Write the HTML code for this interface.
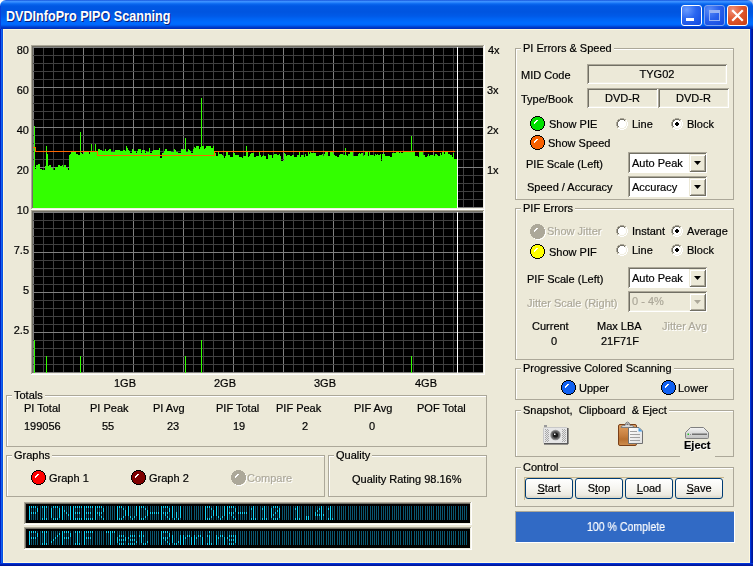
<!DOCTYPE html><html><head><meta charset="utf-8"><style>
html,body{margin:0;padding:0;width:753px;height:566px;overflow:hidden;background:#ece9d8}
.t{position:absolute;margin:1px 0 0 -1px;will-change:transform;-webkit-text-stroke-width:0.2px;font-family:'Liberation Sans', sans-serif;font-size:11px;line-height:13px;white-space:nowrap}
</style></head><body>
<div style="position:absolute;left:0;top:0;width:753px;height:8px;background:linear-gradient(90deg,#fff 50%,#b4c2ec 50%)"></div><div style="position:absolute;left:0;top:8px;width:753px;height:558px;background:#0831d9"></div><div style="position:absolute;left:0;top:0;width:753px;height:30px;border-radius:6px 6px 0 0;background:linear-gradient(180deg,#0a3cd0 0px,#3d95ff 1px,#3a8cff 2px,#1a7af8 3px,#0a66ee 4px,#0058e4 6px,#0055e0 12px,#005ae8 16px,#0064f4 19px,#006cff 23px,#0066fa 25px,#0052e2 26px,#0040d0 27px,#0034c0 28px,#0030b8 29px)"></div><div style="position:absolute;left:0;top:29px;width:3px;height:537px;background:linear-gradient(90deg,#0020c0 0,#0020c0 1px,#1262f2 1px,#1262f2 2px,#0850e0 2px)"></div><div style="position:absolute;left:0;top:6px;width:1px;height:23px;background:#0a40d8"></div><div style="position:absolute;left:750px;top:29px;width:3px;height:537px;background:linear-gradient(90deg,#0040f0,#0020b0 50%,#001090)"></div><div style="position:absolute;left:0;top:563px;width:753px;height:3px;background:linear-gradient(180deg,#0040f0,#0020b0 50%,#001090)"></div><div style="position:absolute;left:3px;top:29px;width:747px;height:534px;background:#ece9d8;box-shadow:inset 1px 1px 0 #fff8dc, inset -1px -1px 0 #fff8dc"></div><div style="position:absolute;left:7px;top:9px;font-family:'Liberation Sans', sans-serif;font-size:14px;line-height:16px;font-weight:bold;color:#0a1e7a;white-space:nowrap;transform-origin:0 0;transform:scaleX(0.9)">DVDInfoPro PIPO Scanning</div><div style="position:absolute;left:6px;top:8px;font-family:'Liberation Sans', sans-serif;font-size:14px;line-height:16px;font-weight:bold;color:#fff;white-space:nowrap;transform-origin:0 0;transform:scaleX(0.9)">DVDInfoPro PIPO Scanning</div><div style="position:absolute;left:681px;top:5px;width:21px;height:21px;box-sizing:border-box;border:1px solid #fff;border-radius:3px;background:radial-gradient(circle at 25% 20%,#6a9cff 0,#2a66f0 45%,#1048e0 100%)"></div><div style="position:absolute;left:686px;top:18px;width:8px;height:3px;background:#fff"></div><div style="position:absolute;left:704px;top:5px;width:21px;height:21px;box-sizing:border-box;border:1px solid #7ea4f0;border-radius:3px;background:radial-gradient(circle at 25% 20%,#5a8cf8 0,#2a62ec 45%,#1048e0 100%)"></div><div style="position:absolute;left:709px;top:10px;width:11px;height:11px;box-sizing:border-box;border:1px solid #98b4f4;border-top-width:3px"></div><div style="position:absolute;left:727px;top:5px;width:21px;height:21px;box-sizing:border-box;border:1px solid #fff;border-radius:3px;background:radial-gradient(circle at 25% 20%,#f0907a 0,#e0582e 45%,#c83c10 100%)"></div><svg style="position:absolute;left:727px;top:5px" width="21" height="21"><path d="M6 6 L15 15 M15 6 L6 15" stroke="#fff" stroke-width="2.2" stroke-linecap="square"/></svg><svg style="position:absolute;left:0;top:0" width="753" height="566" shape-rendering="crispEdges"><rect x="31" y="45" width="454" height="165" fill="#fff"/><rect x="31" y="45" width="453" height="164" fill="#aca899"/><rect x="32" y="46" width="452" height="163" fill="#f1efe2"/><rect x="32" y="46" width="451" height="162" fill="#716f64"/><rect x="33" y="47" width="450" height="161" fill="#000"/><rect x="33" y="47" width="1" height="161" fill="#808080"/><rect x="43" y="47" width="1" height="161" fill="#404040"/><rect x="53" y="47" width="1" height="161" fill="#404040"/><rect x="63" y="47" width="1" height="161" fill="#404040"/><rect x="73" y="47" width="1" height="161" fill="#404040"/><rect x="83" y="47" width="1" height="161" fill="#808080"/><rect x="93" y="47" width="1" height="161" fill="#404040"/><rect x="103" y="47" width="1" height="161" fill="#404040"/><rect x="113" y="47" width="1" height="161" fill="#404040"/><rect x="123" y="47" width="1" height="161" fill="#404040"/><rect x="133" y="47" width="1" height="161" fill="#808080"/><rect x="143" y="47" width="1" height="161" fill="#404040"/><rect x="153" y="47" width="1" height="161" fill="#404040"/><rect x="163" y="47" width="1" height="161" fill="#404040"/><rect x="173" y="47" width="1" height="161" fill="#404040"/><rect x="183" y="47" width="1" height="161" fill="#808080"/><rect x="193" y="47" width="1" height="161" fill="#404040"/><rect x="203" y="47" width="1" height="161" fill="#404040"/><rect x="213" y="47" width="1" height="161" fill="#404040"/><rect x="223" y="47" width="1" height="161" fill="#404040"/><rect x="233" y="47" width="1" height="161" fill="#808080"/><rect x="243" y="47" width="1" height="161" fill="#404040"/><rect x="253" y="47" width="1" height="161" fill="#404040"/><rect x="263" y="47" width="1" height="161" fill="#404040"/><rect x="273" y="47" width="1" height="161" fill="#404040"/><rect x="283" y="47" width="1" height="161" fill="#808080"/><rect x="293" y="47" width="1" height="161" fill="#404040"/><rect x="303" y="47" width="1" height="161" fill="#404040"/><rect x="313" y="47" width="1" height="161" fill="#404040"/><rect x="323" y="47" width="1" height="161" fill="#404040"/><rect x="333" y="47" width="1" height="161" fill="#808080"/><rect x="343" y="47" width="1" height="161" fill="#404040"/><rect x="353" y="47" width="1" height="161" fill="#404040"/><rect x="363" y="47" width="1" height="161" fill="#404040"/><rect x="373" y="47" width="1" height="161" fill="#404040"/><rect x="383" y="47" width="1" height="161" fill="#808080"/><rect x="393" y="47" width="1" height="161" fill="#404040"/><rect x="403" y="47" width="1" height="161" fill="#404040"/><rect x="413" y="47" width="1" height="161" fill="#404040"/><rect x="423" y="47" width="1" height="161" fill="#404040"/><rect x="433" y="47" width="1" height="161" fill="#808080"/><rect x="443" y="47" width="1" height="161" fill="#404040"/><rect x="453" y="47" width="1" height="161" fill="#404040"/><rect x="463" y="47" width="1" height="161" fill="#404040"/><rect x="473" y="47" width="1" height="161" fill="#404040"/><rect x="33" y="47" width="450" height="1" fill="#808080"/><rect x="33" y="55" width="450" height="1" fill="#404040"/><rect x="33" y="63" width="450" height="1" fill="#404040"/><rect x="33" y="71" width="450" height="1" fill="#404040"/><rect x="33" y="79" width="450" height="1" fill="#404040"/><rect x="33" y="87" width="450" height="1" fill="#808080"/><rect x="33" y="95" width="450" height="1" fill="#404040"/><rect x="33" y="103" width="450" height="1" fill="#404040"/><rect x="33" y="111" width="450" height="1" fill="#404040"/><rect x="33" y="119" width="450" height="1" fill="#404040"/><rect x="33" y="127" width="450" height="1" fill="#808080"/><rect x="33" y="135" width="450" height="1" fill="#404040"/><rect x="33" y="143" width="450" height="1" fill="#404040"/><rect x="33" y="151" width="450" height="1" fill="#404040"/><rect x="33" y="159" width="450" height="1" fill="#404040"/><rect x="33" y="167" width="450" height="1" fill="#808080"/><rect x="33" y="175" width="450" height="1" fill="#404040"/><rect x="33" y="183" width="450" height="1" fill="#404040"/><rect x="33" y="191" width="450" height="1" fill="#404040"/><rect x="33" y="199" width="450" height="1" fill="#404040"/><rect x="33" y="207" width="450" height="1" fill="#808080"/><rect x="31" y="210" width="454" height="165" fill="#fff"/><rect x="31" y="210" width="453" height="164" fill="#aca899"/><rect x="32" y="211" width="452" height="163" fill="#f1efe2"/><rect x="32" y="211" width="451" height="162" fill="#716f64"/><rect x="33" y="212" width="450" height="161" fill="#000"/><rect x="33" y="212" width="1" height="161" fill="#808080"/><rect x="43" y="212" width="1" height="161" fill="#404040"/><rect x="53" y="212" width="1" height="161" fill="#404040"/><rect x="63" y="212" width="1" height="161" fill="#404040"/><rect x="73" y="212" width="1" height="161" fill="#404040"/><rect x="83" y="212" width="1" height="161" fill="#808080"/><rect x="93" y="212" width="1" height="161" fill="#404040"/><rect x="103" y="212" width="1" height="161" fill="#404040"/><rect x="113" y="212" width="1" height="161" fill="#404040"/><rect x="123" y="212" width="1" height="161" fill="#404040"/><rect x="133" y="212" width="1" height="161" fill="#808080"/><rect x="143" y="212" width="1" height="161" fill="#404040"/><rect x="153" y="212" width="1" height="161" fill="#404040"/><rect x="163" y="212" width="1" height="161" fill="#404040"/><rect x="173" y="212" width="1" height="161" fill="#404040"/><rect x="183" y="212" width="1" height="161" fill="#808080"/><rect x="193" y="212" width="1" height="161" fill="#404040"/><rect x="203" y="212" width="1" height="161" fill="#404040"/><rect x="213" y="212" width="1" height="161" fill="#404040"/><rect x="223" y="212" width="1" height="161" fill="#404040"/><rect x="233" y="212" width="1" height="161" fill="#808080"/><rect x="243" y="212" width="1" height="161" fill="#404040"/><rect x="253" y="212" width="1" height="161" fill="#404040"/><rect x="263" y="212" width="1" height="161" fill="#404040"/><rect x="273" y="212" width="1" height="161" fill="#404040"/><rect x="283" y="212" width="1" height="161" fill="#808080"/><rect x="293" y="212" width="1" height="161" fill="#404040"/><rect x="303" y="212" width="1" height="161" fill="#404040"/><rect x="313" y="212" width="1" height="161" fill="#404040"/><rect x="323" y="212" width="1" height="161" fill="#404040"/><rect x="333" y="212" width="1" height="161" fill="#808080"/><rect x="343" y="212" width="1" height="161" fill="#404040"/><rect x="353" y="212" width="1" height="161" fill="#404040"/><rect x="363" y="212" width="1" height="161" fill="#404040"/><rect x="373" y="212" width="1" height="161" fill="#404040"/><rect x="383" y="212" width="1" height="161" fill="#808080"/><rect x="393" y="212" width="1" height="161" fill="#404040"/><rect x="403" y="212" width="1" height="161" fill="#404040"/><rect x="413" y="212" width="1" height="161" fill="#404040"/><rect x="423" y="212" width="1" height="161" fill="#404040"/><rect x="433" y="212" width="1" height="161" fill="#808080"/><rect x="443" y="212" width="1" height="161" fill="#404040"/><rect x="453" y="212" width="1" height="161" fill="#404040"/><rect x="463" y="212" width="1" height="161" fill="#404040"/><rect x="473" y="212" width="1" height="161" fill="#404040"/><rect x="33" y="212" width="450" height="1" fill="#808080"/><rect x="33" y="220" width="450" height="1" fill="#404040"/><rect x="33" y="228" width="450" height="1" fill="#404040"/><rect x="33" y="236" width="450" height="1" fill="#404040"/><rect x="33" y="244" width="450" height="1" fill="#404040"/><rect x="33" y="252" width="450" height="1" fill="#808080"/><rect x="33" y="260" width="450" height="1" fill="#404040"/><rect x="33" y="268" width="450" height="1" fill="#404040"/><rect x="33" y="276" width="450" height="1" fill="#404040"/><rect x="33" y="284" width="450" height="1" fill="#404040"/><rect x="33" y="292" width="450" height="1" fill="#808080"/><rect x="33" y="300" width="450" height="1" fill="#404040"/><rect x="33" y="308" width="450" height="1" fill="#404040"/><rect x="33" y="316" width="450" height="1" fill="#404040"/><rect x="33" y="324" width="450" height="1" fill="#404040"/><rect x="33" y="332" width="450" height="1" fill="#808080"/><rect x="33" y="340" width="450" height="1" fill="#404040"/><rect x="33" y="348" width="450" height="1" fill="#404040"/><rect x="33" y="356" width="450" height="1" fill="#404040"/><rect x="33" y="364" width="450" height="1" fill="#404040"/><rect x="33" y="372" width="450" height="1" fill="#808080"/><rect x="33" y="166" width="1" height="42" fill="#33ff00"/><rect x="34" y="126" width="1" height="82" fill="#33ff00"/><rect x="35" y="169" width="1" height="39" fill="#33ff00"/><rect x="36" y="165" width="1" height="43" fill="#33ff00"/><rect x="37" y="165" width="1" height="43" fill="#33ff00"/><rect x="38" y="164" width="1" height="44" fill="#33ff00"/><rect x="39" y="164" width="1" height="44" fill="#33ff00"/><rect x="40" y="169" width="1" height="39" fill="#33ff00"/><rect x="41" y="169" width="1" height="39" fill="#33ff00"/><rect x="42" y="170" width="1" height="38" fill="#33ff00"/><rect x="43" y="170" width="1" height="38" fill="#33ff00"/><rect x="44" y="170" width="1" height="38" fill="#33ff00"/><rect x="45" y="166" width="1" height="42" fill="#33ff00"/><rect x="46" y="146" width="1" height="62" fill="#33ff00"/><rect x="47" y="154" width="1" height="54" fill="#33ff00"/><rect x="48" y="166" width="1" height="42" fill="#33ff00"/><rect x="49" y="165" width="1" height="43" fill="#33ff00"/><rect x="50" y="165" width="1" height="43" fill="#33ff00"/><rect x="51" y="168" width="1" height="40" fill="#33ff00"/><rect x="52" y="168" width="1" height="40" fill="#33ff00"/><rect x="53" y="170" width="1" height="38" fill="#33ff00"/><rect x="54" y="170" width="1" height="38" fill="#33ff00"/><rect x="55" y="167" width="1" height="41" fill="#33ff00"/><rect x="56" y="167" width="1" height="41" fill="#33ff00"/><rect x="57" y="167" width="1" height="41" fill="#33ff00"/><rect x="58" y="165" width="1" height="43" fill="#33ff00"/><rect x="59" y="165" width="1" height="43" fill="#33ff00"/><rect x="60" y="166" width="1" height="42" fill="#33ff00"/><rect x="61" y="166" width="1" height="42" fill="#33ff00"/><rect x="62" y="165" width="1" height="43" fill="#33ff00"/><rect x="63" y="167" width="1" height="41" fill="#33ff00"/><rect x="64" y="165" width="1" height="43" fill="#33ff00"/><rect x="65" y="165" width="1" height="43" fill="#33ff00"/><rect x="66" y="168" width="1" height="40" fill="#33ff00"/><rect x="67" y="168" width="1" height="40" fill="#33ff00"/><rect x="68" y="170" width="1" height="38" fill="#33ff00"/><rect x="69" y="155" width="1" height="53" fill="#33ff00"/><rect x="70" y="154" width="1" height="54" fill="#33ff00"/><rect x="71" y="152" width="1" height="56" fill="#33ff00"/><rect x="72" y="152" width="1" height="56" fill="#33ff00"/><rect x="73" y="152" width="1" height="56" fill="#33ff00"/><rect x="74" y="152" width="1" height="56" fill="#33ff00"/><rect x="75" y="152" width="1" height="56" fill="#33ff00"/><rect x="76" y="154" width="1" height="54" fill="#33ff00"/><rect x="77" y="154" width="1" height="54" fill="#33ff00"/><rect x="78" y="155" width="1" height="53" fill="#33ff00"/><rect x="79" y="155" width="1" height="53" fill="#33ff00"/><rect x="80" y="132" width="1" height="76" fill="#33ff00"/><rect x="81" y="153" width="1" height="55" fill="#33ff00"/><rect x="82" y="154" width="1" height="54" fill="#33ff00"/><rect x="83" y="154" width="1" height="54" fill="#33ff00"/><rect x="84" y="152" width="1" height="56" fill="#33ff00"/><rect x="85" y="152" width="1" height="56" fill="#33ff00"/><rect x="86" y="152" width="1" height="56" fill="#33ff00"/><rect x="87" y="152" width="1" height="56" fill="#33ff00"/><rect x="88" y="152" width="1" height="56" fill="#33ff00"/><rect x="89" y="154" width="1" height="54" fill="#33ff00"/><rect x="90" y="152" width="1" height="56" fill="#33ff00"/><rect x="91" y="144" width="1" height="64" fill="#33ff00"/><rect x="92" y="152" width="1" height="56" fill="#33ff00"/><rect x="93" y="152" width="1" height="56" fill="#33ff00"/><rect x="94" y="152" width="1" height="56" fill="#33ff00"/><rect x="95" y="144" width="1" height="64" fill="#33ff00"/><rect x="96" y="152" width="1" height="56" fill="#33ff00"/><rect x="97" y="152" width="1" height="56" fill="#33ff00"/><rect x="98" y="149" width="1" height="59" fill="#33ff00"/><rect x="99" y="149" width="1" height="59" fill="#33ff00"/><rect x="100" y="150" width="1" height="58" fill="#33ff00"/><rect x="101" y="150" width="1" height="58" fill="#33ff00"/><rect x="102" y="151" width="1" height="57" fill="#33ff00"/><rect x="103" y="151" width="1" height="57" fill="#33ff00"/><rect x="104" y="151" width="1" height="57" fill="#33ff00"/><rect x="105" y="149" width="1" height="59" fill="#33ff00"/><rect x="106" y="151" width="1" height="57" fill="#33ff00"/><rect x="107" y="151" width="1" height="57" fill="#33ff00"/><rect x="108" y="150" width="1" height="58" fill="#33ff00"/><rect x="109" y="149" width="1" height="59" fill="#33ff00"/><rect x="110" y="149" width="1" height="59" fill="#33ff00"/><rect x="111" y="152" width="1" height="56" fill="#33ff00"/><rect x="112" y="152" width="1" height="56" fill="#33ff00"/><rect x="113" y="152" width="1" height="56" fill="#33ff00"/><rect x="114" y="152" width="1" height="56" fill="#33ff00"/><rect x="115" y="150" width="1" height="58" fill="#33ff00"/><rect x="116" y="150" width="1" height="58" fill="#33ff00"/><rect x="117" y="150" width="1" height="58" fill="#33ff00"/><rect x="118" y="150" width="1" height="58" fill="#33ff00"/><rect x="119" y="150" width="1" height="58" fill="#33ff00"/><rect x="120" y="151" width="1" height="57" fill="#33ff00"/><rect x="121" y="151" width="1" height="57" fill="#33ff00"/><rect x="122" y="151" width="1" height="57" fill="#33ff00"/><rect x="123" y="150" width="1" height="58" fill="#33ff00"/><rect x="124" y="150" width="1" height="58" fill="#33ff00"/><rect x="125" y="151" width="1" height="57" fill="#33ff00"/><rect x="126" y="146" width="1" height="62" fill="#33ff00"/><rect x="127" y="148" width="1" height="60" fill="#33ff00"/><rect x="128" y="150" width="1" height="58" fill="#33ff00"/><rect x="129" y="151" width="1" height="57" fill="#33ff00"/><rect x="130" y="153" width="1" height="55" fill="#33ff00"/><rect x="131" y="153" width="1" height="55" fill="#33ff00"/><rect x="132" y="149" width="1" height="59" fill="#33ff00"/><rect x="133" y="150" width="1" height="58" fill="#33ff00"/><rect x="134" y="151" width="1" height="57" fill="#33ff00"/><rect x="135" y="151" width="1" height="57" fill="#33ff00"/><rect x="136" y="153" width="1" height="55" fill="#33ff00"/><rect x="137" y="151" width="1" height="57" fill="#33ff00"/><rect x="138" y="149" width="1" height="59" fill="#33ff00"/><rect x="139" y="149" width="1" height="59" fill="#33ff00"/><rect x="140" y="149" width="1" height="59" fill="#33ff00"/><rect x="141" y="153" width="1" height="55" fill="#33ff00"/><rect x="142" y="150" width="1" height="58" fill="#33ff00"/><rect x="143" y="150" width="1" height="58" fill="#33ff00"/><rect x="144" y="150" width="1" height="58" fill="#33ff00"/><rect x="145" y="153" width="1" height="55" fill="#33ff00"/><rect x="146" y="151" width="1" height="57" fill="#33ff00"/><rect x="147" y="152" width="1" height="56" fill="#33ff00"/><rect x="148" y="152" width="1" height="56" fill="#33ff00"/><rect x="149" y="148" width="1" height="60" fill="#33ff00"/><rect x="150" y="153" width="1" height="55" fill="#33ff00"/><rect x="151" y="153" width="1" height="55" fill="#33ff00"/><rect x="152" y="151" width="1" height="57" fill="#33ff00"/><rect x="153" y="150" width="1" height="58" fill="#33ff00"/><rect x="154" y="150" width="1" height="58" fill="#33ff00"/><rect x="155" y="150" width="1" height="58" fill="#33ff00"/><rect x="156" y="150" width="1" height="58" fill="#33ff00"/><rect x="157" y="150" width="1" height="58" fill="#33ff00"/><rect x="158" y="150" width="1" height="58" fill="#33ff00"/><rect x="159" y="148" width="1" height="60" fill="#33ff00"/><rect x="160" y="158" width="1" height="50" fill="#33ff00"/><rect x="161" y="158" width="1" height="50" fill="#33ff00"/><rect x="162" y="153" width="1" height="55" fill="#33ff00"/><rect x="163" y="153" width="1" height="55" fill="#33ff00"/><rect x="164" y="151" width="1" height="57" fill="#33ff00"/><rect x="165" y="149" width="1" height="59" fill="#33ff00"/><rect x="166" y="149" width="1" height="59" fill="#33ff00"/><rect x="167" y="151" width="1" height="57" fill="#33ff00"/><rect x="168" y="151" width="1" height="57" fill="#33ff00"/><rect x="169" y="151" width="1" height="57" fill="#33ff00"/><rect x="170" y="151" width="1" height="57" fill="#33ff00"/><rect x="171" y="152" width="1" height="56" fill="#33ff00"/><rect x="172" y="152" width="1" height="56" fill="#33ff00"/><rect x="173" y="152" width="1" height="56" fill="#33ff00"/><rect x="174" y="149" width="1" height="59" fill="#33ff00"/><rect x="175" y="150" width="1" height="58" fill="#33ff00"/><rect x="176" y="152" width="1" height="56" fill="#33ff00"/><rect x="177" y="152" width="1" height="56" fill="#33ff00"/><rect x="178" y="153" width="1" height="55" fill="#33ff00"/><rect x="179" y="153" width="1" height="55" fill="#33ff00"/><rect x="180" y="153" width="1" height="55" fill="#33ff00"/><rect x="181" y="149" width="1" height="59" fill="#33ff00"/><rect x="182" y="149" width="1" height="59" fill="#33ff00"/><rect x="183" y="150" width="1" height="58" fill="#33ff00"/><rect x="184" y="149" width="1" height="59" fill="#33ff00"/><rect x="185" y="138" width="1" height="70" fill="#33ff00"/><rect x="186" y="152" width="1" height="56" fill="#33ff00"/><rect x="187" y="152" width="1" height="56" fill="#33ff00"/><rect x="188" y="149" width="1" height="59" fill="#33ff00"/><rect x="189" y="150" width="1" height="58" fill="#33ff00"/><rect x="190" y="151" width="1" height="57" fill="#33ff00"/><rect x="191" y="153" width="1" height="55" fill="#33ff00"/><rect x="192" y="153" width="1" height="55" fill="#33ff00"/><rect x="193" y="149" width="1" height="59" fill="#33ff00"/><rect x="194" y="147" width="1" height="61" fill="#33ff00"/><rect x="195" y="148" width="1" height="60" fill="#33ff00"/><rect x="196" y="146" width="1" height="62" fill="#33ff00"/><rect x="197" y="146" width="1" height="62" fill="#33ff00"/><rect x="198" y="146" width="1" height="62" fill="#33ff00"/><rect x="199" y="149" width="1" height="59" fill="#33ff00"/><rect x="200" y="147" width="1" height="61" fill="#33ff00"/><rect x="201" y="98" width="1" height="110" fill="#33ff00"/><rect x="202" y="146" width="1" height="62" fill="#33ff00"/><rect x="203" y="146" width="1" height="62" fill="#33ff00"/><rect x="204" y="149" width="1" height="59" fill="#33ff00"/><rect x="205" y="148" width="1" height="60" fill="#33ff00"/><rect x="206" y="146" width="1" height="62" fill="#33ff00"/><rect x="207" y="146" width="1" height="62" fill="#33ff00"/><rect x="208" y="146" width="1" height="62" fill="#33ff00"/><rect x="209" y="146" width="1" height="62" fill="#33ff00"/><rect x="210" y="146" width="1" height="62" fill="#33ff00"/><rect x="211" y="148" width="1" height="60" fill="#33ff00"/><rect x="212" y="148" width="1" height="60" fill="#33ff00"/><rect x="213" y="146" width="1" height="62" fill="#33ff00"/><rect x="214" y="154" width="1" height="54" fill="#33ff00"/><rect x="215" y="153" width="1" height="55" fill="#33ff00"/><rect x="216" y="156" width="1" height="52" fill="#33ff00"/><rect x="217" y="156" width="1" height="52" fill="#33ff00"/><rect x="218" y="152" width="1" height="56" fill="#33ff00"/><rect x="219" y="154" width="1" height="54" fill="#33ff00"/><rect x="220" y="154" width="1" height="54" fill="#33ff00"/><rect x="221" y="154" width="1" height="54" fill="#33ff00"/><rect x="222" y="155" width="1" height="53" fill="#33ff00"/><rect x="223" y="156" width="1" height="52" fill="#33ff00"/><rect x="224" y="158" width="1" height="50" fill="#33ff00"/><rect x="225" y="156" width="1" height="52" fill="#33ff00"/><rect x="226" y="152" width="1" height="56" fill="#33ff00"/><rect x="227" y="152" width="1" height="56" fill="#33ff00"/><rect x="228" y="155" width="1" height="53" fill="#33ff00"/><rect x="229" y="155" width="1" height="53" fill="#33ff00"/><rect x="230" y="157" width="1" height="51" fill="#33ff00"/><rect x="231" y="157" width="1" height="51" fill="#33ff00"/><rect x="232" y="157" width="1" height="51" fill="#33ff00"/><rect x="233" y="153" width="1" height="55" fill="#33ff00"/><rect x="234" y="153" width="1" height="55" fill="#33ff00"/><rect x="235" y="155" width="1" height="53" fill="#33ff00"/><rect x="236" y="155" width="1" height="53" fill="#33ff00"/><rect x="237" y="155" width="1" height="53" fill="#33ff00"/><rect x="238" y="155" width="1" height="53" fill="#33ff00"/><rect x="239" y="157" width="1" height="51" fill="#33ff00"/><rect x="240" y="157" width="1" height="51" fill="#33ff00"/><rect x="241" y="157" width="1" height="51" fill="#33ff00"/><rect x="242" y="158" width="1" height="50" fill="#33ff00"/><rect x="243" y="156" width="1" height="52" fill="#33ff00"/><rect x="244" y="156" width="1" height="52" fill="#33ff00"/><rect x="245" y="156" width="1" height="52" fill="#33ff00"/><rect x="246" y="146" width="1" height="62" fill="#33ff00"/><rect x="247" y="152" width="1" height="56" fill="#33ff00"/><rect x="248" y="157" width="1" height="51" fill="#33ff00"/><rect x="249" y="156" width="1" height="52" fill="#33ff00"/><rect x="250" y="154" width="1" height="54" fill="#33ff00"/><rect x="251" y="153" width="1" height="55" fill="#33ff00"/><rect x="252" y="153" width="1" height="55" fill="#33ff00"/><rect x="253" y="153" width="1" height="55" fill="#33ff00"/><rect x="254" y="157" width="1" height="51" fill="#33ff00"/><rect x="255" y="157" width="1" height="51" fill="#33ff00"/><rect x="256" y="156" width="1" height="52" fill="#33ff00"/><rect x="257" y="156" width="1" height="52" fill="#33ff00"/><rect x="258" y="156" width="1" height="52" fill="#33ff00"/><rect x="259" y="152" width="1" height="56" fill="#33ff00"/><rect x="260" y="155" width="1" height="53" fill="#33ff00"/><rect x="261" y="157" width="1" height="51" fill="#33ff00"/><rect x="262" y="156" width="1" height="52" fill="#33ff00"/><rect x="263" y="155" width="1" height="53" fill="#33ff00"/><rect x="264" y="156" width="1" height="52" fill="#33ff00"/><rect x="265" y="156" width="1" height="52" fill="#33ff00"/><rect x="266" y="159" width="1" height="49" fill="#33ff00"/><rect x="267" y="159" width="1" height="49" fill="#33ff00"/><rect x="268" y="154" width="1" height="54" fill="#33ff00"/><rect x="269" y="155" width="1" height="53" fill="#33ff00"/><rect x="270" y="155" width="1" height="53" fill="#33ff00"/><rect x="271" y="155" width="1" height="53" fill="#33ff00"/><rect x="272" y="158" width="1" height="50" fill="#33ff00"/><rect x="273" y="155" width="1" height="53" fill="#33ff00"/><rect x="274" y="154" width="1" height="54" fill="#33ff00"/><rect x="275" y="154" width="1" height="54" fill="#33ff00"/><rect x="276" y="154" width="1" height="54" fill="#33ff00"/><rect x="277" y="155" width="1" height="53" fill="#33ff00"/><rect x="278" y="155" width="1" height="53" fill="#33ff00"/><rect x="279" y="154" width="1" height="54" fill="#33ff00"/><rect x="280" y="156" width="1" height="52" fill="#33ff00"/><rect x="281" y="161" width="1" height="47" fill="#33ff00"/><rect x="282" y="161" width="1" height="47" fill="#33ff00"/><rect x="283" y="161" width="1" height="47" fill="#33ff00"/><rect x="284" y="153" width="1" height="55" fill="#33ff00"/><rect x="285" y="154" width="1" height="54" fill="#33ff00"/><rect x="286" y="156" width="1" height="52" fill="#33ff00"/><rect x="287" y="155" width="1" height="53" fill="#33ff00"/><rect x="288" y="155" width="1" height="53" fill="#33ff00"/><rect x="289" y="155" width="1" height="53" fill="#33ff00"/><rect x="290" y="156" width="1" height="52" fill="#33ff00"/><rect x="291" y="156" width="1" height="52" fill="#33ff00"/><rect x="292" y="155" width="1" height="53" fill="#33ff00"/><rect x="293" y="155" width="1" height="53" fill="#33ff00"/><rect x="294" y="157" width="1" height="51" fill="#33ff00"/><rect x="295" y="157" width="1" height="51" fill="#33ff00"/><rect x="296" y="157" width="1" height="51" fill="#33ff00"/><rect x="297" y="155" width="1" height="53" fill="#33ff00"/><rect x="298" y="155" width="1" height="53" fill="#33ff00"/><rect x="299" y="152" width="1" height="56" fill="#33ff00"/><rect x="300" y="157" width="1" height="51" fill="#33ff00"/><rect x="301" y="155" width="1" height="53" fill="#33ff00"/><rect x="302" y="155" width="1" height="53" fill="#33ff00"/><rect x="303" y="155" width="1" height="53" fill="#33ff00"/><rect x="304" y="157" width="1" height="51" fill="#33ff00"/><rect x="305" y="154" width="1" height="54" fill="#33ff00"/><rect x="306" y="156" width="1" height="52" fill="#33ff00"/><rect x="307" y="156" width="1" height="52" fill="#33ff00"/><rect x="308" y="152" width="1" height="56" fill="#33ff00"/><rect x="309" y="154" width="1" height="54" fill="#33ff00"/><rect x="310" y="152" width="1" height="56" fill="#33ff00"/><rect x="311" y="153" width="1" height="55" fill="#33ff00"/><rect x="312" y="153" width="1" height="55" fill="#33ff00"/><rect x="313" y="153" width="1" height="55" fill="#33ff00"/><rect x="314" y="153" width="1" height="55" fill="#33ff00"/><rect x="315" y="153" width="1" height="55" fill="#33ff00"/><rect x="316" y="156" width="1" height="52" fill="#33ff00"/><rect x="317" y="156" width="1" height="52" fill="#33ff00"/><rect x="318" y="156" width="1" height="52" fill="#33ff00"/><rect x="319" y="155" width="1" height="53" fill="#33ff00"/><rect x="320" y="155" width="1" height="53" fill="#33ff00"/><rect x="321" y="155" width="1" height="53" fill="#33ff00"/><rect x="322" y="154" width="1" height="54" fill="#33ff00"/><rect x="323" y="156" width="1" height="52" fill="#33ff00"/><rect x="324" y="154" width="1" height="54" fill="#33ff00"/><rect x="325" y="152" width="1" height="56" fill="#33ff00"/><rect x="326" y="152" width="1" height="56" fill="#33ff00"/><rect x="327" y="152" width="1" height="56" fill="#33ff00"/><rect x="328" y="156" width="1" height="52" fill="#33ff00"/><rect x="329" y="156" width="1" height="52" fill="#33ff00"/><rect x="330" y="152" width="1" height="56" fill="#33ff00"/><rect x="331" y="152" width="1" height="56" fill="#33ff00"/><rect x="332" y="152" width="1" height="56" fill="#33ff00"/><rect x="333" y="154" width="1" height="54" fill="#33ff00"/><rect x="334" y="155" width="1" height="53" fill="#33ff00"/><rect x="335" y="156" width="1" height="52" fill="#33ff00"/><rect x="336" y="156" width="1" height="52" fill="#33ff00"/><rect x="337" y="157" width="1" height="51" fill="#33ff00"/><rect x="338" y="157" width="1" height="51" fill="#33ff00"/><rect x="339" y="155" width="1" height="53" fill="#33ff00"/><rect x="340" y="154" width="1" height="54" fill="#33ff00"/><rect x="341" y="154" width="1" height="54" fill="#33ff00"/><rect x="342" y="154" width="1" height="54" fill="#33ff00"/><rect x="343" y="155" width="1" height="53" fill="#33ff00"/><rect x="344" y="155" width="1" height="53" fill="#33ff00"/><rect x="345" y="148" width="1" height="60" fill="#33ff00"/><rect x="346" y="155" width="1" height="53" fill="#33ff00"/><rect x="347" y="156" width="1" height="52" fill="#33ff00"/><rect x="348" y="154" width="1" height="54" fill="#33ff00"/><rect x="349" y="154" width="1" height="54" fill="#33ff00"/><rect x="350" y="152" width="1" height="56" fill="#33ff00"/><rect x="351" y="152" width="1" height="56" fill="#33ff00"/><rect x="352" y="152" width="1" height="56" fill="#33ff00"/><rect x="353" y="156" width="1" height="52" fill="#33ff00"/><rect x="354" y="156" width="1" height="52" fill="#33ff00"/><rect x="355" y="156" width="1" height="52" fill="#33ff00"/><rect x="356" y="156" width="1" height="52" fill="#33ff00"/><rect x="357" y="156" width="1" height="52" fill="#33ff00"/><rect x="358" y="154" width="1" height="54" fill="#33ff00"/><rect x="359" y="153" width="1" height="55" fill="#33ff00"/><rect x="360" y="154" width="1" height="54" fill="#33ff00"/><rect x="361" y="153" width="1" height="55" fill="#33ff00"/><rect x="362" y="153" width="1" height="55" fill="#33ff00"/><rect x="363" y="156" width="1" height="52" fill="#33ff00"/><rect x="364" y="155" width="1" height="53" fill="#33ff00"/><rect x="365" y="152" width="1" height="56" fill="#33ff00"/><rect x="366" y="152" width="1" height="56" fill="#33ff00"/><rect x="367" y="152" width="1" height="56" fill="#33ff00"/><rect x="368" y="156" width="1" height="52" fill="#33ff00"/><rect x="369" y="152" width="1" height="56" fill="#33ff00"/><rect x="370" y="155" width="1" height="53" fill="#33ff00"/><rect x="371" y="155" width="1" height="53" fill="#33ff00"/><rect x="372" y="155" width="1" height="53" fill="#33ff00"/><rect x="373" y="155" width="1" height="53" fill="#33ff00"/><rect x="374" y="156" width="1" height="52" fill="#33ff00"/><rect x="375" y="154" width="1" height="54" fill="#33ff00"/><rect x="376" y="155" width="1" height="53" fill="#33ff00"/><rect x="377" y="154" width="1" height="54" fill="#33ff00"/><rect x="378" y="155" width="1" height="53" fill="#33ff00"/><rect x="379" y="155" width="1" height="53" fill="#33ff00"/><rect x="380" y="154" width="1" height="54" fill="#33ff00"/><rect x="381" y="161" width="1" height="47" fill="#33ff00"/><rect x="382" y="154" width="1" height="54" fill="#33ff00"/><rect x="383" y="154" width="1" height="54" fill="#33ff00"/><rect x="384" y="154" width="1" height="54" fill="#33ff00"/><rect x="385" y="156" width="1" height="52" fill="#33ff00"/><rect x="386" y="156" width="1" height="52" fill="#33ff00"/><rect x="387" y="156" width="1" height="52" fill="#33ff00"/><rect x="388" y="156" width="1" height="52" fill="#33ff00"/><rect x="389" y="156" width="1" height="52" fill="#33ff00"/><rect x="390" y="157" width="1" height="51" fill="#33ff00"/><rect x="391" y="157" width="1" height="51" fill="#33ff00"/><rect x="392" y="153" width="1" height="55" fill="#33ff00"/><rect x="393" y="153" width="1" height="55" fill="#33ff00"/><rect x="394" y="153" width="1" height="55" fill="#33ff00"/><rect x="395" y="153" width="1" height="55" fill="#33ff00"/><rect x="396" y="151" width="1" height="57" fill="#33ff00"/><rect x="397" y="152" width="1" height="56" fill="#33ff00"/><rect x="398" y="152" width="1" height="56" fill="#33ff00"/><rect x="399" y="153" width="1" height="55" fill="#33ff00"/><rect x="400" y="151" width="1" height="57" fill="#33ff00"/><rect x="401" y="153" width="1" height="55" fill="#33ff00"/><rect x="402" y="153" width="1" height="55" fill="#33ff00"/><rect x="403" y="152" width="1" height="56" fill="#33ff00"/><rect x="404" y="152" width="1" height="56" fill="#33ff00"/><rect x="405" y="152" width="1" height="56" fill="#33ff00"/><rect x="406" y="152" width="1" height="56" fill="#33ff00"/><rect x="407" y="152" width="1" height="56" fill="#33ff00"/><rect x="408" y="152" width="1" height="56" fill="#33ff00"/><rect x="409" y="152" width="1" height="56" fill="#33ff00"/><rect x="410" y="152" width="1" height="56" fill="#33ff00"/><rect x="411" y="136" width="1" height="72" fill="#33ff00"/><rect x="412" y="152" width="1" height="56" fill="#33ff00"/><rect x="413" y="152" width="1" height="56" fill="#33ff00"/><rect x="414" y="152" width="1" height="56" fill="#33ff00"/><rect x="415" y="156" width="1" height="52" fill="#33ff00"/><rect x="416" y="156" width="1" height="52" fill="#33ff00"/><rect x="417" y="156" width="1" height="52" fill="#33ff00"/><rect x="418" y="157" width="1" height="51" fill="#33ff00"/><rect x="419" y="152" width="1" height="56" fill="#33ff00"/><rect x="420" y="152" width="1" height="56" fill="#33ff00"/><rect x="421" y="152" width="1" height="56" fill="#33ff00"/><rect x="422" y="152" width="1" height="56" fill="#33ff00"/><rect x="423" y="155" width="1" height="53" fill="#33ff00"/><rect x="424" y="155" width="1" height="53" fill="#33ff00"/><rect x="425" y="157" width="1" height="51" fill="#33ff00"/><rect x="426" y="157" width="1" height="51" fill="#33ff00"/><rect x="427" y="156" width="1" height="52" fill="#33ff00"/><rect x="428" y="154" width="1" height="54" fill="#33ff00"/><rect x="429" y="156" width="1" height="52" fill="#33ff00"/><rect x="430" y="155" width="1" height="53" fill="#33ff00"/><rect x="431" y="155" width="1" height="53" fill="#33ff00"/><rect x="432" y="155" width="1" height="53" fill="#33ff00"/><rect x="433" y="155" width="1" height="53" fill="#33ff00"/><rect x="434" y="156" width="1" height="52" fill="#33ff00"/><rect x="435" y="154" width="1" height="54" fill="#33ff00"/><rect x="436" y="154" width="1" height="54" fill="#33ff00"/><rect x="437" y="155" width="1" height="53" fill="#33ff00"/><rect x="438" y="156" width="1" height="52" fill="#33ff00"/><rect x="439" y="156" width="1" height="52" fill="#33ff00"/><rect x="440" y="153" width="1" height="55" fill="#33ff00"/><rect x="441" y="155" width="1" height="53" fill="#33ff00"/><rect x="442" y="152" width="1" height="56" fill="#33ff00"/><rect x="443" y="152" width="1" height="56" fill="#33ff00"/><rect x="444" y="154" width="1" height="54" fill="#33ff00"/><rect x="445" y="152" width="1" height="56" fill="#33ff00"/><rect x="446" y="152" width="1" height="56" fill="#33ff00"/><rect x="447" y="152" width="1" height="56" fill="#33ff00"/><rect x="448" y="154" width="1" height="54" fill="#33ff00"/><rect x="449" y="154" width="1" height="54" fill="#33ff00"/><rect x="450" y="155" width="1" height="53" fill="#33ff00"/><rect x="451" y="155" width="1" height="53" fill="#33ff00"/><rect x="452" y="157" width="1" height="51" fill="#33ff00"/><rect x="453" y="153" width="1" height="55" fill="#33ff00"/><rect x="454" y="159" width="1" height="49" fill="#33ff00"/><rect x="455" y="159" width="1" height="49" fill="#33ff00"/><rect x="456" y="159" width="1" height="49" fill="#33ff00"/><path d="M33 147.5 H35.5 V151.5 H97.5 V155.5 H214.5 V151.5 H454.5" stroke="#ff6600" stroke-width="1" fill="none"/><rect x="34" y="340" width="1" height="33" fill="#33ff00"/><rect x="46" y="356" width="1" height="17" fill="#33ff00"/><rect x="80" y="356" width="1" height="17" fill="#33ff00"/><rect x="185" y="356" width="1" height="17" fill="#33ff00"/><rect x="201" y="340" width="1" height="33" fill="#33ff00"/><rect x="411" y="356" width="1" height="17" fill="#33ff00"/><rect x="457" y="47" width="1" height="161" fill="#fff"/><rect x="457" y="212" width="1" height="161" fill="#fff"/></svg><div class="t" style="left:0;width:30px;text-align:right;top:43px">80</div><div class="t" style="left:0;width:30px;text-align:right;top:83px">60</div><div class="t" style="left:0;width:30px;text-align:right;top:123px">40</div><div class="t" style="left:0;width:30px;text-align:right;top:163px">20</div><div class="t" style="left:0;width:30px;text-align:right;top:203px">10</div><div class="t" style="left:0;width:30px;text-align:right;top:243px">7.5</div><div class="t" style="left:0;width:30px;text-align:right;top:283px">5</div><div class="t" style="left:0;width:30px;text-align:right;top:323px">2.5</div><div class="t" style="left:489px;top:43px;color:#000;font-weight:normal;">4x</div><div class="t" style="left:488px;top:83px;color:#000;font-weight:normal;">3x</div><div class="t" style="left:488px;top:123px;color:#000;font-weight:normal;">2x</div><div class="t" style="left:488px;top:163px;color:#000;font-weight:normal;">1x</div><div class="t" style="left:115px;top:376px;color:#000;font-weight:normal;">1GB</div><div class="t" style="left:215px;top:376px;color:#000;font-weight:normal;">2GB</div><div class="t" style="left:315px;top:376px;color:#000;font-weight:normal;">3GB</div><div class="t" style="left:416px;top:376px;color:#000;font-weight:normal;">4GB</div><div style="position:absolute;left:7px;top:396px;width:480px;height:51px;border:1px solid #fff;box-sizing:border-box"></div><div style="position:absolute;left:6px;top:395px;width:481px;height:52px;border:1px solid #aca899;box-sizing:border-box"></div><div class="t" style="left:13px;top:388px;padding:0 2px;background:#ece9d8">Totals</div><div class="t" style="left:25px;top:401px;color:#000;font-weight:normal;">PI Total</div><div class="t" style="left:91px;top:401px;color:#000;font-weight:normal;">PI Peak</div><div class="t" style="left:154px;top:401px;color:#000;font-weight:normal;">PI Avg</div><div class="t" style="left:217px;top:401px;color:#000;font-weight:normal;">PIF Total</div><div class="t" style="left:277px;top:401px;color:#000;font-weight:normal;">PIF Peak</div><div class="t" style="left:355px;top:401px;color:#000;font-weight:normal;">PIF Avg</div><div class="t" style="left:418px;top:401px;color:#000;font-weight:normal;">POF Total</div><div class="t" style="left:25px;top:419px;color:#000;font-weight:normal;">199056</div><div class="t" style="left:103px;top:419px;color:#000;font-weight:normal;">55</div><div class="t" style="left:168px;top:419px;color:#000;font-weight:normal;">23</div><div class="t" style="left:234px;top:419px;color:#000;font-weight:normal;">19</div><div class="t" style="left:303px;top:419px;color:#000;font-weight:normal;">2</div><div class="t" style="left:370px;top:419px;color:#000;font-weight:normal;">0</div><div style="position:absolute;left:7px;top:456px;width:318px;height:41px;border:1px solid #fff;box-sizing:border-box"></div><div style="position:absolute;left:6px;top:455px;width:319px;height:42px;border:1px solid #aca899;box-sizing:border-box"></div><div class="t" style="left:13px;top:448px;padding:0 2px;background:#ece9d8">Graphs</div><svg style="position:absolute;left:31px;top:470px" width="17" height="17" shape-rendering="crispEdges"><rect x="5" y="0" width="5" height="1" fill="#000"/><rect x="3" y="1" width="2" height="1" fill="#000"/><rect x="10" y="1" width="2" height="1" fill="#000"/><rect x="2" y="2" width="1" height="1" fill="#000"/><rect x="12" y="2" width="1" height="1" fill="#000"/><rect x="1" y="3" width="1" height="1" fill="#000"/><rect x="13" y="3" width="1" height="1" fill="#000"/><rect x="1" y="4" width="1" height="1" fill="#000"/><rect x="13" y="4" width="1" height="1" fill="#000"/><rect x="0" y="5" width="1" height="1" fill="#000"/><rect x="14" y="5" width="1" height="1" fill="#000"/><rect x="0" y="6" width="1" height="1" fill="#000"/><rect x="14" y="6" width="1" height="1" fill="#000"/><rect x="0" y="7" width="1" height="1" fill="#000"/><rect x="14" y="7" width="1" height="1" fill="#000"/><rect x="0" y="8" width="1" height="1" fill="#000"/><rect x="14" y="8" width="1" height="1" fill="#000"/><rect x="0" y="9" width="1" height="1" fill="#000"/><rect x="14" y="9" width="1" height="1" fill="#000"/><rect x="1" y="10" width="1" height="1" fill="#000"/><rect x="13" y="10" width="1" height="1" fill="#000"/><rect x="1" y="11" width="1" height="1" fill="#000"/><rect x="13" y="11" width="1" height="1" fill="#000"/><rect x="2" y="12" width="1" height="1" fill="#000"/><rect x="12" y="12" width="1" height="1" fill="#000"/><rect x="3" y="13" width="2" height="1" fill="#000"/><rect x="10" y="13" width="2" height="1" fill="#000"/><rect x="5" y="14" width="5" height="1" fill="#000"/><rect x="5" y="1" width="5" height="1" fill="#ff0000"/><rect x="3" y="2" width="9" height="1" fill="#ff0000"/><rect x="2" y="3" width="11" height="1" fill="#ff0000"/><rect x="2" y="4" width="11" height="1" fill="#ff0000"/><rect x="1" y="5" width="13" height="1" fill="#ff0000"/><rect x="1" y="6" width="13" height="1" fill="#ff0000"/><rect x="1" y="7" width="13" height="1" fill="#ff0000"/><rect x="1" y="8" width="13" height="1" fill="#ff0000"/><rect x="1" y="9" width="13" height="1" fill="#ff0000"/><rect x="2" y="10" width="11" height="1" fill="#ff0000"/><rect x="2" y="11" width="11" height="1" fill="#ff0000"/><rect x="3" y="12" width="9" height="1" fill="#ff0000"/><rect x="5" y="13" width="5" height="1" fill="#ff0000"/><rect x="4" y="6" width="1" height="1" fill="#fff"/><rect x="4" y="7" width="1" height="1" fill="#fff"/><rect x="5" y="5" width="1" height="1" fill="#fff"/><rect x="5" y="6" width="1" height="1" fill="#fff"/><rect x="6" y="4" width="1" height="1" fill="#fff"/><rect x="6" y="5" width="1" height="1" fill="#fff"/><rect x="7" y="4" width="1" height="1" fill="#fff"/></svg><div class="t" style="left:50px;top:471px;color:#000;font-weight:normal;">Graph 1</div><svg style="position:absolute;left:131px;top:470px" width="17" height="17" shape-rendering="crispEdges"><rect x="5" y="0" width="5" height="1" fill="#000"/><rect x="3" y="1" width="2" height="1" fill="#000"/><rect x="10" y="1" width="2" height="1" fill="#000"/><rect x="2" y="2" width="1" height="1" fill="#000"/><rect x="12" y="2" width="1" height="1" fill="#000"/><rect x="1" y="3" width="1" height="1" fill="#000"/><rect x="13" y="3" width="1" height="1" fill="#000"/><rect x="1" y="4" width="1" height="1" fill="#000"/><rect x="13" y="4" width="1" height="1" fill="#000"/><rect x="0" y="5" width="1" height="1" fill="#000"/><rect x="14" y="5" width="1" height="1" fill="#000"/><rect x="0" y="6" width="1" height="1" fill="#000"/><rect x="14" y="6" width="1" height="1" fill="#000"/><rect x="0" y="7" width="1" height="1" fill="#000"/><rect x="14" y="7" width="1" height="1" fill="#000"/><rect x="0" y="8" width="1" height="1" fill="#000"/><rect x="14" y="8" width="1" height="1" fill="#000"/><rect x="0" y="9" width="1" height="1" fill="#000"/><rect x="14" y="9" width="1" height="1" fill="#000"/><rect x="1" y="10" width="1" height="1" fill="#000"/><rect x="13" y="10" width="1" height="1" fill="#000"/><rect x="1" y="11" width="1" height="1" fill="#000"/><rect x="13" y="11" width="1" height="1" fill="#000"/><rect x="2" y="12" width="1" height="1" fill="#000"/><rect x="12" y="12" width="1" height="1" fill="#000"/><rect x="3" y="13" width="2" height="1" fill="#000"/><rect x="10" y="13" width="2" height="1" fill="#000"/><rect x="5" y="14" width="5" height="1" fill="#000"/><rect x="5" y="1" width="5" height="1" fill="#800000"/><rect x="3" y="2" width="9" height="1" fill="#800000"/><rect x="2" y="3" width="11" height="1" fill="#800000"/><rect x="2" y="4" width="11" height="1" fill="#800000"/><rect x="1" y="5" width="13" height="1" fill="#800000"/><rect x="1" y="6" width="13" height="1" fill="#800000"/><rect x="1" y="7" width="13" height="1" fill="#800000"/><rect x="1" y="8" width="13" height="1" fill="#800000"/><rect x="1" y="9" width="13" height="1" fill="#800000"/><rect x="2" y="10" width="11" height="1" fill="#800000"/><rect x="2" y="11" width="11" height="1" fill="#800000"/><rect x="3" y="12" width="9" height="1" fill="#800000"/><rect x="5" y="13" width="5" height="1" fill="#800000"/><rect x="4" y="6" width="1" height="1" fill="#fff"/><rect x="4" y="7" width="1" height="1" fill="#fff"/><rect x="5" y="5" width="1" height="1" fill="#fff"/><rect x="5" y="6" width="1" height="1" fill="#fff"/><rect x="6" y="4" width="1" height="1" fill="#fff"/><rect x="6" y="5" width="1" height="1" fill="#fff"/><rect x="7" y="4" width="1" height="1" fill="#fff"/></svg><div class="t" style="left:150px;top:471px;color:#000;font-weight:normal;">Graph 2</div><svg style="position:absolute;left:231px;top:470px" width="17" height="17" shape-rendering="crispEdges"><rect x="11" y="2" width="2" height="1" fill="#fff"/><rect x="13" y="3" width="1" height="1" fill="#fff"/><rect x="14" y="4" width="1" height="1" fill="#fff"/><rect x="14" y="5" width="1" height="1" fill="#fff"/><rect x="15" y="6" width="1" height="1" fill="#fff"/><rect x="15" y="7" width="1" height="1" fill="#fff"/><rect x="15" y="8" width="1" height="1" fill="#fff"/><rect x="15" y="9" width="1" height="1" fill="#fff"/><rect x="15" y="10" width="1" height="1" fill="#fff"/><rect x="14" y="11" width="1" height="1" fill="#fff"/><rect x="2" y="12" width="1" height="1" fill="#fff"/><rect x="14" y="12" width="1" height="1" fill="#fff"/><rect x="3" y="13" width="1" height="1" fill="#fff"/><rect x="13" y="13" width="1" height="1" fill="#fff"/><rect x="4" y="14" width="2" height="1" fill="#fff"/><rect x="11" y="14" width="2" height="1" fill="#fff"/><rect x="6" y="15" width="5" height="1" fill="#fff"/><rect x="5" y="0" width="5" height="1" fill="#aca899"/><rect x="3" y="1" width="2" height="1" fill="#aca899"/><rect x="10" y="1" width="2" height="1" fill="#aca899"/><rect x="2" y="2" width="1" height="1" fill="#aca899"/><rect x="12" y="2" width="1" height="1" fill="#aca899"/><rect x="1" y="3" width="1" height="1" fill="#aca899"/><rect x="13" y="3" width="1" height="1" fill="#aca899"/><rect x="1" y="4" width="1" height="1" fill="#aca899"/><rect x="13" y="4" width="1" height="1" fill="#aca899"/><rect x="0" y="5" width="1" height="1" fill="#aca899"/><rect x="14" y="5" width="1" height="1" fill="#aca899"/><rect x="0" y="6" width="1" height="1" fill="#aca899"/><rect x="14" y="6" width="1" height="1" fill="#aca899"/><rect x="0" y="7" width="1" height="1" fill="#aca899"/><rect x="14" y="7" width="1" height="1" fill="#aca899"/><rect x="0" y="8" width="1" height="1" fill="#aca899"/><rect x="14" y="8" width="1" height="1" fill="#aca899"/><rect x="0" y="9" width="1" height="1" fill="#aca899"/><rect x="14" y="9" width="1" height="1" fill="#aca899"/><rect x="1" y="10" width="1" height="1" fill="#aca899"/><rect x="13" y="10" width="1" height="1" fill="#aca899"/><rect x="1" y="11" width="1" height="1" fill="#aca899"/><rect x="13" y="11" width="1" height="1" fill="#aca899"/><rect x="2" y="12" width="1" height="1" fill="#aca899"/><rect x="12" y="12" width="1" height="1" fill="#aca899"/><rect x="3" y="13" width="2" height="1" fill="#aca899"/><rect x="10" y="13" width="2" height="1" fill="#aca899"/><rect x="5" y="14" width="5" height="1" fill="#aca899"/><rect x="5" y="1" width="5" height="1" fill="#aca899"/><rect x="3" y="2" width="9" height="1" fill="#aca899"/><rect x="2" y="3" width="11" height="1" fill="#aca899"/><rect x="2" y="4" width="11" height="1" fill="#aca899"/><rect x="1" y="5" width="13" height="1" fill="#aca899"/><rect x="1" y="6" width="13" height="1" fill="#aca899"/><rect x="1" y="7" width="13" height="1" fill="#aca899"/><rect x="1" y="8" width="13" height="1" fill="#aca899"/><rect x="1" y="9" width="13" height="1" fill="#aca899"/><rect x="2" y="10" width="11" height="1" fill="#aca899"/><rect x="2" y="11" width="11" height="1" fill="#aca899"/><rect x="3" y="12" width="9" height="1" fill="#aca899"/><rect x="5" y="13" width="5" height="1" fill="#aca899"/><rect x="4" y="6" width="1" height="1" fill="#fff"/><rect x="4" y="7" width="1" height="1" fill="#fff"/><rect x="5" y="5" width="1" height="1" fill="#fff"/><rect x="5" y="6" width="1" height="1" fill="#fff"/><rect x="6" y="4" width="1" height="1" fill="#fff"/><rect x="6" y="5" width="1" height="1" fill="#fff"/><rect x="7" y="4" width="1" height="1" fill="#fff"/></svg><div class="t" style="left:249px;top:472px;color:#fff;font-weight:normal;">Compare</div><div class="t" style="left:248px;top:471px;color:#aca899;font-weight:normal;">Compare</div><div style="position:absolute;left:329px;top:456px;width:158px;height:41px;border:1px solid #fff;box-sizing:border-box"></div><div style="position:absolute;left:328px;top:455px;width:159px;height:42px;border:1px solid #aca899;box-sizing:border-box"></div><div class="t" style="left:335px;top:448px;padding:0 2px;background:#ece9d8">Quality</div><div class="t" style="left:353px;top:472px;color:#000;font-weight:normal;">Quality Rating 98.16%</div><svg style="position:absolute;left:0;top:0" width="753" height="566" shape-rendering="crispEdges"><rect x="24" y="502" width="448" height="23" fill="#fff"/><rect x="24" y="502" width="447" height="22" fill="#aca899"/><rect x="25" y="503" width="446" height="21" fill="#f1efe2"/><rect x="25" y="503" width="445" height="20" fill="#716f64"/><rect x="26" y="504" width="444" height="19" fill="#000"/><rect x="29" y="506" width="1" height="14" fill="#0a5670"/><rect x="29" y="506" width="1" height="14" fill="#12d2f6"/><rect x="31" y="506" width="1" height="14" fill="#0a5670"/><rect x="31" y="506" width="1" height="2" fill="#12d2f6"/><rect x="31" y="512" width="1" height="2" fill="#12d2f6"/><rect x="33" y="506" width="1" height="14" fill="#0a5670"/><rect x="33" y="506" width="1" height="2" fill="#12d2f6"/><rect x="33" y="512" width="1" height="2" fill="#12d2f6"/><rect x="35" y="506" width="1" height="14" fill="#0a5670"/><rect x="35" y="506" width="1" height="2" fill="#12d2f6"/><rect x="35" y="512" width="1" height="2" fill="#12d2f6"/><rect x="37" y="506" width="1" height="14" fill="#0a5670"/><rect x="37" y="508" width="1" height="4" fill="#12d2f6"/><rect x="40" y="506" width="1" height="14" fill="#0a5670"/><rect x="42" y="506" width="1" height="14" fill="#0a5670"/><rect x="42" y="506" width="1" height="2" fill="#12d2f6"/><rect x="42" y="518" width="1" height="2" fill="#12d2f6"/><rect x="44" y="506" width="1" height="14" fill="#0a5670"/><rect x="44" y="506" width="1" height="14" fill="#12d2f6"/><rect x="46" y="506" width="1" height="14" fill="#0a5670"/><rect x="46" y="506" width="1" height="2" fill="#12d2f6"/><rect x="46" y="518" width="1" height="2" fill="#12d2f6"/><rect x="48" y="506" width="1" height="14" fill="#0a5670"/><rect x="51" y="506" width="1" height="14" fill="#0a5670"/><rect x="51" y="508" width="1" height="10" fill="#12d2f6"/><rect x="53" y="506" width="1" height="14" fill="#0a5670"/><rect x="53" y="506" width="1" height="2" fill="#12d2f6"/><rect x="53" y="518" width="1" height="2" fill="#12d2f6"/><rect x="55" y="506" width="1" height="14" fill="#0a5670"/><rect x="55" y="506" width="1" height="2" fill="#12d2f6"/><rect x="55" y="518" width="1" height="2" fill="#12d2f6"/><rect x="57" y="506" width="1" height="14" fill="#0a5670"/><rect x="57" y="506" width="1" height="2" fill="#12d2f6"/><rect x="57" y="518" width="1" height="2" fill="#12d2f6"/><rect x="59" y="506" width="1" height="14" fill="#0a5670"/><rect x="59" y="508" width="1" height="10" fill="#12d2f6"/><rect x="62" y="506" width="1" height="14" fill="#0a5670"/><rect x="62" y="506" width="1" height="14" fill="#12d2f6"/><rect x="64" y="506" width="1" height="14" fill="#0a5670"/><rect x="64" y="510" width="1" height="2" fill="#12d2f6"/><rect x="66" y="506" width="1" height="14" fill="#0a5670"/><rect x="66" y="512" width="1" height="2" fill="#12d2f6"/><rect x="68" y="506" width="1" height="14" fill="#0a5670"/><rect x="68" y="514" width="1" height="2" fill="#12d2f6"/><rect x="70" y="506" width="1" height="14" fill="#0a5670"/><rect x="70" y="506" width="1" height="14" fill="#12d2f6"/><rect x="73" y="506" width="1" height="14" fill="#0a5670"/><rect x="73" y="506" width="1" height="14" fill="#12d2f6"/><rect x="75" y="506" width="1" height="14" fill="#0a5670"/><rect x="75" y="506" width="1" height="2" fill="#12d2f6"/><rect x="75" y="512" width="1" height="2" fill="#12d2f6"/><rect x="75" y="518" width="1" height="2" fill="#12d2f6"/><rect x="77" y="506" width="1" height="14" fill="#0a5670"/><rect x="77" y="506" width="1" height="2" fill="#12d2f6"/><rect x="77" y="512" width="1" height="2" fill="#12d2f6"/><rect x="77" y="518" width="1" height="2" fill="#12d2f6"/><rect x="79" y="506" width="1" height="14" fill="#0a5670"/><rect x="79" y="506" width="1" height="2" fill="#12d2f6"/><rect x="79" y="512" width="1" height="2" fill="#12d2f6"/><rect x="79" y="518" width="1" height="2" fill="#12d2f6"/><rect x="81" y="506" width="1" height="14" fill="#0a5670"/><rect x="81" y="506" width="1" height="2" fill="#12d2f6"/><rect x="81" y="518" width="1" height="2" fill="#12d2f6"/><rect x="84" y="506" width="1" height="14" fill="#0a5670"/><rect x="84" y="506" width="1" height="14" fill="#12d2f6"/><rect x="86" y="506" width="1" height="14" fill="#0a5670"/><rect x="86" y="506" width="1" height="2" fill="#12d2f6"/><rect x="86" y="512" width="1" height="2" fill="#12d2f6"/><rect x="86" y="518" width="1" height="2" fill="#12d2f6"/><rect x="88" y="506" width="1" height="14" fill="#0a5670"/><rect x="88" y="506" width="1" height="2" fill="#12d2f6"/><rect x="88" y="512" width="1" height="2" fill="#12d2f6"/><rect x="88" y="518" width="1" height="2" fill="#12d2f6"/><rect x="90" y="506" width="1" height="14" fill="#0a5670"/><rect x="90" y="506" width="1" height="2" fill="#12d2f6"/><rect x="90" y="512" width="1" height="2" fill="#12d2f6"/><rect x="90" y="518" width="1" height="2" fill="#12d2f6"/><rect x="92" y="506" width="1" height="14" fill="#0a5670"/><rect x="92" y="506" width="1" height="2" fill="#12d2f6"/><rect x="92" y="518" width="1" height="2" fill="#12d2f6"/><rect x="95" y="506" width="1" height="14" fill="#0a5670"/><rect x="95" y="506" width="1" height="14" fill="#12d2f6"/><rect x="97" y="506" width="1" height="14" fill="#0a5670"/><rect x="97" y="506" width="1" height="2" fill="#12d2f6"/><rect x="97" y="512" width="1" height="2" fill="#12d2f6"/><rect x="99" y="506" width="1" height="14" fill="#0a5670"/><rect x="99" y="506" width="1" height="2" fill="#12d2f6"/><rect x="99" y="512" width="1" height="4" fill="#12d2f6"/><rect x="101" y="506" width="1" height="14" fill="#0a5670"/><rect x="101" y="506" width="1" height="2" fill="#12d2f6"/><rect x="101" y="512" width="1" height="2" fill="#12d2f6"/><rect x="101" y="516" width="1" height="2" fill="#12d2f6"/><rect x="103" y="506" width="1" height="14" fill="#0a5670"/><rect x="103" y="508" width="1" height="4" fill="#12d2f6"/><rect x="103" y="518" width="1" height="2" fill="#12d2f6"/><rect x="106" y="506" width="1" height="14" fill="#0a5670"/><rect x="108" y="506" width="1" height="14" fill="#0a5670"/><rect x="110" y="506" width="1" height="14" fill="#0a5670"/><rect x="112" y="506" width="1" height="14" fill="#0a5670"/><rect x="114" y="506" width="1" height="14" fill="#0a5670"/><rect x="117" y="506" width="1" height="14" fill="#0a5670"/><rect x="117" y="506" width="1" height="14" fill="#12d2f6"/><rect x="119" y="506" width="1" height="14" fill="#0a5670"/><rect x="119" y="506" width="1" height="2" fill="#12d2f6"/><rect x="119" y="518" width="1" height="2" fill="#12d2f6"/><rect x="121" y="506" width="1" height="14" fill="#0a5670"/><rect x="121" y="506" width="1" height="2" fill="#12d2f6"/><rect x="121" y="518" width="1" height="2" fill="#12d2f6"/><rect x="123" y="506" width="1" height="14" fill="#0a5670"/><rect x="123" y="508" width="1" height="2" fill="#12d2f6"/><rect x="123" y="516" width="1" height="2" fill="#12d2f6"/><rect x="125" y="506" width="1" height="14" fill="#0a5670"/><rect x="125" y="510" width="1" height="6" fill="#12d2f6"/><rect x="128" y="506" width="1" height="14" fill="#0a5670"/><rect x="128" y="506" width="1" height="10" fill="#12d2f6"/><rect x="130" y="506" width="1" height="14" fill="#0a5670"/><rect x="130" y="516" width="1" height="2" fill="#12d2f6"/><rect x="132" y="506" width="1" height="14" fill="#0a5670"/><rect x="132" y="518" width="1" height="2" fill="#12d2f6"/><rect x="134" y="506" width="1" height="14" fill="#0a5670"/><rect x="134" y="516" width="1" height="2" fill="#12d2f6"/><rect x="136" y="506" width="1" height="14" fill="#0a5670"/><rect x="136" y="506" width="1" height="10" fill="#12d2f6"/><rect x="139" y="506" width="1" height="14" fill="#0a5670"/><rect x="139" y="506" width="1" height="14" fill="#12d2f6"/><rect x="141" y="506" width="1" height="14" fill="#0a5670"/><rect x="141" y="506" width="1" height="2" fill="#12d2f6"/><rect x="141" y="518" width="1" height="2" fill="#12d2f6"/><rect x="143" y="506" width="1" height="14" fill="#0a5670"/><rect x="143" y="506" width="1" height="2" fill="#12d2f6"/><rect x="143" y="518" width="1" height="2" fill="#12d2f6"/><rect x="145" y="506" width="1" height="14" fill="#0a5670"/><rect x="145" y="508" width="1" height="2" fill="#12d2f6"/><rect x="145" y="516" width="1" height="2" fill="#12d2f6"/><rect x="147" y="506" width="1" height="14" fill="#0a5670"/><rect x="147" y="510" width="1" height="6" fill="#12d2f6"/><rect x="150" y="506" width="1" height="14" fill="#0a5670"/><rect x="150" y="512" width="1" height="2" fill="#12d2f6"/><rect x="152" y="506" width="1" height="14" fill="#0a5670"/><rect x="152" y="512" width="1" height="2" fill="#12d2f6"/><rect x="154" y="506" width="1" height="14" fill="#0a5670"/><rect x="154" y="512" width="1" height="2" fill="#12d2f6"/><rect x="156" y="506" width="1" height="14" fill="#0a5670"/><rect x="156" y="512" width="1" height="2" fill="#12d2f6"/><rect x="158" y="506" width="1" height="14" fill="#0a5670"/><rect x="158" y="512" width="1" height="2" fill="#12d2f6"/><rect x="161" y="506" width="1" height="14" fill="#0a5670"/><rect x="161" y="506" width="1" height="14" fill="#12d2f6"/><rect x="163" y="506" width="1" height="14" fill="#0a5670"/><rect x="163" y="506" width="1" height="2" fill="#12d2f6"/><rect x="163" y="512" width="1" height="2" fill="#12d2f6"/><rect x="165" y="506" width="1" height="14" fill="#0a5670"/><rect x="165" y="506" width="1" height="2" fill="#12d2f6"/><rect x="165" y="512" width="1" height="4" fill="#12d2f6"/><rect x="167" y="506" width="1" height="14" fill="#0a5670"/><rect x="167" y="506" width="1" height="2" fill="#12d2f6"/><rect x="167" y="512" width="1" height="2" fill="#12d2f6"/><rect x="167" y="516" width="1" height="2" fill="#12d2f6"/><rect x="169" y="506" width="1" height="14" fill="#0a5670"/><rect x="169" y="508" width="1" height="4" fill="#12d2f6"/><rect x="169" y="518" width="1" height="2" fill="#12d2f6"/><rect x="172" y="506" width="1" height="14" fill="#0a5670"/><rect x="172" y="506" width="1" height="12" fill="#12d2f6"/><rect x="174" y="506" width="1" height="14" fill="#0a5670"/><rect x="174" y="518" width="1" height="2" fill="#12d2f6"/><rect x="176" y="506" width="1" height="14" fill="#0a5670"/><rect x="176" y="512" width="1" height="6" fill="#12d2f6"/><rect x="178" y="506" width="1" height="14" fill="#0a5670"/><rect x="178" y="518" width="1" height="2" fill="#12d2f6"/><rect x="180" y="506" width="1" height="14" fill="#0a5670"/><rect x="180" y="506" width="1" height="12" fill="#12d2f6"/><rect x="183" y="506" width="1" height="14" fill="#0a5670"/><rect x="185" y="506" width="1" height="14" fill="#0a5670"/><rect x="187" y="506" width="1" height="14" fill="#0a5670"/><rect x="189" y="506" width="1" height="14" fill="#0a5670"/><rect x="191" y="506" width="1" height="14" fill="#0a5670"/><rect x="194" y="506" width="1" height="14" fill="#0a5670"/><rect x="196" y="506" width="1" height="14" fill="#0a5670"/><rect x="198" y="506" width="1" height="14" fill="#0a5670"/><rect x="200" y="506" width="1" height="14" fill="#0a5670"/><rect x="202" y="506" width="1" height="14" fill="#0a5670"/><rect x="205" y="506" width="1" height="14" fill="#0a5670"/><rect x="205" y="506" width="1" height="14" fill="#12d2f6"/><rect x="207" y="506" width="1" height="14" fill="#0a5670"/><rect x="207" y="506" width="1" height="2" fill="#12d2f6"/><rect x="207" y="518" width="1" height="2" fill="#12d2f6"/><rect x="209" y="506" width="1" height="14" fill="#0a5670"/><rect x="209" y="506" width="1" height="2" fill="#12d2f6"/><rect x="209" y="518" width="1" height="2" fill="#12d2f6"/><rect x="211" y="506" width="1" height="14" fill="#0a5670"/><rect x="211" y="508" width="1" height="2" fill="#12d2f6"/><rect x="211" y="516" width="1" height="2" fill="#12d2f6"/><rect x="213" y="506" width="1" height="14" fill="#0a5670"/><rect x="213" y="510" width="1" height="6" fill="#12d2f6"/><rect x="216" y="506" width="1" height="14" fill="#0a5670"/><rect x="216" y="506" width="1" height="10" fill="#12d2f6"/><rect x="218" y="506" width="1" height="14" fill="#0a5670"/><rect x="218" y="516" width="1" height="2" fill="#12d2f6"/><rect x="220" y="506" width="1" height="14" fill="#0a5670"/><rect x="220" y="518" width="1" height="2" fill="#12d2f6"/><rect x="222" y="506" width="1" height="14" fill="#0a5670"/><rect x="222" y="516" width="1" height="2" fill="#12d2f6"/><rect x="224" y="506" width="1" height="14" fill="#0a5670"/><rect x="224" y="506" width="1" height="10" fill="#12d2f6"/><rect x="227" y="506" width="1" height="14" fill="#0a5670"/><rect x="227" y="506" width="1" height="14" fill="#12d2f6"/><rect x="229" y="506" width="1" height="14" fill="#0a5670"/><rect x="229" y="506" width="1" height="2" fill="#12d2f6"/><rect x="229" y="512" width="1" height="2" fill="#12d2f6"/><rect x="231" y="506" width="1" height="14" fill="#0a5670"/><rect x="231" y="506" width="1" height="2" fill="#12d2f6"/><rect x="231" y="512" width="1" height="4" fill="#12d2f6"/><rect x="233" y="506" width="1" height="14" fill="#0a5670"/><rect x="233" y="506" width="1" height="2" fill="#12d2f6"/><rect x="233" y="512" width="1" height="2" fill="#12d2f6"/><rect x="233" y="516" width="1" height="2" fill="#12d2f6"/><rect x="235" y="506" width="1" height="14" fill="#0a5670"/><rect x="235" y="508" width="1" height="4" fill="#12d2f6"/><rect x="235" y="518" width="1" height="2" fill="#12d2f6"/><rect x="238" y="506" width="1" height="14" fill="#0a5670"/><rect x="238" y="512" width="1" height="2" fill="#12d2f6"/><rect x="240" y="506" width="1" height="14" fill="#0a5670"/><rect x="240" y="512" width="1" height="2" fill="#12d2f6"/><rect x="242" y="506" width="1" height="14" fill="#0a5670"/><rect x="242" y="512" width="1" height="2" fill="#12d2f6"/><rect x="244" y="506" width="1" height="14" fill="#0a5670"/><rect x="244" y="512" width="1" height="2" fill="#12d2f6"/><rect x="246" y="506" width="1" height="14" fill="#0a5670"/><rect x="246" y="512" width="1" height="2" fill="#12d2f6"/><rect x="249" y="506" width="1" height="14" fill="#0a5670"/><rect x="251" y="506" width="1" height="14" fill="#0a5670"/><rect x="251" y="508" width="1" height="2" fill="#12d2f6"/><rect x="251" y="518" width="1" height="2" fill="#12d2f6"/><rect x="253" y="506" width="1" height="14" fill="#0a5670"/><rect x="253" y="506" width="1" height="14" fill="#12d2f6"/><rect x="255" y="506" width="1" height="14" fill="#0a5670"/><rect x="255" y="518" width="1" height="2" fill="#12d2f6"/><rect x="257" y="506" width="1" height="14" fill="#0a5670"/><rect x="260" y="506" width="1" height="14" fill="#0a5670"/><rect x="262" y="506" width="1" height="14" fill="#0a5670"/><rect x="262" y="508" width="1" height="2" fill="#12d2f6"/><rect x="262" y="518" width="1" height="2" fill="#12d2f6"/><rect x="264" y="506" width="1" height="14" fill="#0a5670"/><rect x="264" y="506" width="1" height="14" fill="#12d2f6"/><rect x="266" y="506" width="1" height="14" fill="#0a5670"/><rect x="266" y="518" width="1" height="2" fill="#12d2f6"/><rect x="268" y="506" width="1" height="14" fill="#0a5670"/><rect x="271" y="506" width="1" height="14" fill="#0a5670"/><rect x="271" y="508" width="1" height="10" fill="#12d2f6"/><rect x="273" y="506" width="1" height="14" fill="#0a5670"/><rect x="273" y="506" width="1" height="2" fill="#12d2f6"/><rect x="273" y="514" width="1" height="2" fill="#12d2f6"/><rect x="273" y="518" width="1" height="2" fill="#12d2f6"/><rect x="275" y="506" width="1" height="14" fill="#0a5670"/><rect x="275" y="506" width="1" height="2" fill="#12d2f6"/><rect x="275" y="512" width="1" height="2" fill="#12d2f6"/><rect x="275" y="518" width="1" height="2" fill="#12d2f6"/><rect x="277" y="506" width="1" height="14" fill="#0a5670"/><rect x="277" y="506" width="1" height="2" fill="#12d2f6"/><rect x="277" y="510" width="1" height="2" fill="#12d2f6"/><rect x="277" y="518" width="1" height="2" fill="#12d2f6"/><rect x="279" y="506" width="1" height="14" fill="#0a5670"/><rect x="279" y="508" width="1" height="10" fill="#12d2f6"/><rect x="282" y="506" width="1" height="14" fill="#0a5670"/><rect x="284" y="506" width="1" height="14" fill="#0a5670"/><rect x="286" y="506" width="1" height="14" fill="#0a5670"/><rect x="288" y="506" width="1" height="14" fill="#0a5670"/><rect x="290" y="506" width="1" height="14" fill="#0a5670"/><rect x="293" y="506" width="1" height="14" fill="#0a5670"/><rect x="295" y="506" width="1" height="14" fill="#0a5670"/><rect x="295" y="508" width="1" height="2" fill="#12d2f6"/><rect x="295" y="518" width="1" height="2" fill="#12d2f6"/><rect x="297" y="506" width="1" height="14" fill="#0a5670"/><rect x="297" y="506" width="1" height="14" fill="#12d2f6"/><rect x="299" y="506" width="1" height="14" fill="#0a5670"/><rect x="299" y="518" width="1" height="2" fill="#12d2f6"/><rect x="301" y="506" width="1" height="14" fill="#0a5670"/><rect x="304" y="506" width="1" height="14" fill="#0a5670"/><rect x="306" y="506" width="1" height="14" fill="#0a5670"/><rect x="306" y="516" width="1" height="4" fill="#12d2f6"/><rect x="308" y="506" width="1" height="14" fill="#0a5670"/><rect x="308" y="516" width="1" height="4" fill="#12d2f6"/><rect x="310" y="506" width="1" height="14" fill="#0a5670"/><rect x="312" y="506" width="1" height="14" fill="#0a5670"/><rect x="315" y="506" width="1" height="14" fill="#0a5670"/><rect x="315" y="512" width="1" height="4" fill="#12d2f6"/><rect x="317" y="506" width="1" height="14" fill="#0a5670"/><rect x="317" y="510" width="1" height="2" fill="#12d2f6"/><rect x="317" y="514" width="1" height="2" fill="#12d2f6"/><rect x="319" y="506" width="1" height="14" fill="#0a5670"/><rect x="319" y="508" width="1" height="2" fill="#12d2f6"/><rect x="319" y="514" width="1" height="2" fill="#12d2f6"/><rect x="321" y="506" width="1" height="14" fill="#0a5670"/><rect x="321" y="506" width="1" height="14" fill="#12d2f6"/><rect x="323" y="506" width="1" height="14" fill="#0a5670"/><rect x="323" y="514" width="1" height="2" fill="#12d2f6"/><rect x="326" y="506" width="1" height="14" fill="#0a5670"/><rect x="328" y="506" width="1" height="14" fill="#0a5670"/><rect x="328" y="508" width="1" height="2" fill="#12d2f6"/><rect x="328" y="518" width="1" height="2" fill="#12d2f6"/><rect x="330" y="506" width="1" height="14" fill="#0a5670"/><rect x="330" y="506" width="1" height="14" fill="#12d2f6"/><rect x="332" y="506" width="1" height="14" fill="#0a5670"/><rect x="332" y="518" width="1" height="2" fill="#12d2f6"/><rect x="334" y="506" width="1" height="14" fill="#0a5670"/><rect x="337" y="506" width="1" height="14" fill="#0a5670"/><rect x="339" y="506" width="1" height="14" fill="#0a5670"/><rect x="341" y="506" width="1" height="14" fill="#0a5670"/><rect x="343" y="506" width="1" height="14" fill="#0a5670"/><rect x="345" y="506" width="1" height="14" fill="#0a5670"/><rect x="348" y="506" width="1" height="14" fill="#0a5670"/><rect x="350" y="506" width="1" height="14" fill="#0a5670"/><rect x="352" y="506" width="1" height="14" fill="#0a5670"/><rect x="354" y="506" width="1" height="14" fill="#0a5670"/><rect x="356" y="506" width="1" height="14" fill="#0a5670"/><rect x="359" y="506" width="1" height="14" fill="#0a5670"/><rect x="361" y="506" width="1" height="14" fill="#0a5670"/><rect x="363" y="506" width="1" height="14" fill="#0a5670"/><rect x="365" y="506" width="1" height="14" fill="#0a5670"/><rect x="367" y="506" width="1" height="14" fill="#0a5670"/><rect x="370" y="506" width="1" height="14" fill="#0a5670"/><rect x="372" y="506" width="1" height="14" fill="#0a5670"/><rect x="374" y="506" width="1" height="14" fill="#0a5670"/><rect x="376" y="506" width="1" height="14" fill="#0a5670"/><rect x="378" y="506" width="1" height="14" fill="#0a5670"/><rect x="381" y="506" width="1" height="14" fill="#0a5670"/><rect x="383" y="506" width="1" height="14" fill="#0a5670"/><rect x="385" y="506" width="1" height="14" fill="#0a5670"/><rect x="387" y="506" width="1" height="14" fill="#0a5670"/><rect x="389" y="506" width="1" height="14" fill="#0a5670"/><rect x="392" y="506" width="1" height="14" fill="#0a5670"/><rect x="394" y="506" width="1" height="14" fill="#0a5670"/><rect x="396" y="506" width="1" height="14" fill="#0a5670"/><rect x="398" y="506" width="1" height="14" fill="#0a5670"/><rect x="400" y="506" width="1" height="14" fill="#0a5670"/><rect x="403" y="506" width="1" height="14" fill="#0a5670"/><rect x="405" y="506" width="1" height="14" fill="#0a5670"/><rect x="407" y="506" width="1" height="14" fill="#0a5670"/><rect x="409" y="506" width="1" height="14" fill="#0a5670"/><rect x="411" y="506" width="1" height="14" fill="#0a5670"/><rect x="414" y="506" width="1" height="14" fill="#0a5670"/><rect x="416" y="506" width="1" height="14" fill="#0a5670"/><rect x="418" y="506" width="1" height="14" fill="#0a5670"/><rect x="420" y="506" width="1" height="14" fill="#0a5670"/><rect x="422" y="506" width="1" height="14" fill="#0a5670"/><rect x="425" y="506" width="1" height="14" fill="#0a5670"/><rect x="427" y="506" width="1" height="14" fill="#0a5670"/><rect x="429" y="506" width="1" height="14" fill="#0a5670"/><rect x="431" y="506" width="1" height="14" fill="#0a5670"/><rect x="433" y="506" width="1" height="14" fill="#0a5670"/><rect x="436" y="506" width="1" height="14" fill="#0a5670"/><rect x="438" y="506" width="1" height="14" fill="#0a5670"/><rect x="440" y="506" width="1" height="14" fill="#0a5670"/><rect x="442" y="506" width="1" height="14" fill="#0a5670"/><rect x="444" y="506" width="1" height="14" fill="#0a5670"/><rect x="447" y="506" width="1" height="14" fill="#0a5670"/><rect x="449" y="506" width="1" height="14" fill="#0a5670"/><rect x="451" y="506" width="1" height="14" fill="#0a5670"/><rect x="453" y="506" width="1" height="14" fill="#0a5670"/><rect x="455" y="506" width="1" height="14" fill="#0a5670"/><rect x="458" y="506" width="1" height="14" fill="#0a5670"/><rect x="460" y="506" width="1" height="14" fill="#0a5670"/><rect x="462" y="506" width="1" height="14" fill="#0a5670"/><rect x="464" y="506" width="1" height="14" fill="#0a5670"/><rect x="466" y="506" width="1" height="14" fill="#0a5670"/></svg><svg style="position:absolute;left:0;top:0" width="753" height="566" shape-rendering="crispEdges"><rect x="24" y="527" width="448" height="23" fill="#fff"/><rect x="24" y="527" width="447" height="22" fill="#aca899"/><rect x="25" y="528" width="446" height="21" fill="#f1efe2"/><rect x="25" y="528" width="445" height="20" fill="#716f64"/><rect x="26" y="529" width="444" height="19" fill="#000"/><rect x="29" y="531" width="1" height="14" fill="#0a5670"/><rect x="29" y="531" width="1" height="14" fill="#12d2f6"/><rect x="31" y="531" width="1" height="14" fill="#0a5670"/><rect x="31" y="531" width="1" height="2" fill="#12d2f6"/><rect x="31" y="537" width="1" height="2" fill="#12d2f6"/><rect x="33" y="531" width="1" height="14" fill="#0a5670"/><rect x="33" y="531" width="1" height="2" fill="#12d2f6"/><rect x="33" y="537" width="1" height="2" fill="#12d2f6"/><rect x="35" y="531" width="1" height="14" fill="#0a5670"/><rect x="35" y="531" width="1" height="2" fill="#12d2f6"/><rect x="35" y="537" width="1" height="2" fill="#12d2f6"/><rect x="37" y="531" width="1" height="14" fill="#0a5670"/><rect x="37" y="533" width="1" height="4" fill="#12d2f6"/><rect x="40" y="531" width="1" height="14" fill="#0a5670"/><rect x="42" y="531" width="1" height="14" fill="#0a5670"/><rect x="42" y="531" width="1" height="2" fill="#12d2f6"/><rect x="42" y="543" width="1" height="2" fill="#12d2f6"/><rect x="44" y="531" width="1" height="14" fill="#0a5670"/><rect x="44" y="531" width="1" height="14" fill="#12d2f6"/><rect x="46" y="531" width="1" height="14" fill="#0a5670"/><rect x="46" y="531" width="1" height="2" fill="#12d2f6"/><rect x="46" y="543" width="1" height="2" fill="#12d2f6"/><rect x="48" y="531" width="1" height="14" fill="#0a5670"/><rect x="51" y="531" width="1" height="14" fill="#0a5670"/><rect x="51" y="541" width="1" height="2" fill="#12d2f6"/><rect x="53" y="531" width="1" height="14" fill="#0a5670"/><rect x="53" y="539" width="1" height="2" fill="#12d2f6"/><rect x="55" y="531" width="1" height="14" fill="#0a5670"/><rect x="55" y="537" width="1" height="2" fill="#12d2f6"/><rect x="57" y="531" width="1" height="14" fill="#0a5670"/><rect x="57" y="535" width="1" height="2" fill="#12d2f6"/><rect x="59" y="531" width="1" height="14" fill="#0a5670"/><rect x="59" y="533" width="1" height="2" fill="#12d2f6"/><rect x="62" y="531" width="1" height="14" fill="#0a5670"/><rect x="62" y="531" width="1" height="14" fill="#12d2f6"/><rect x="64" y="531" width="1" height="14" fill="#0a5670"/><rect x="64" y="531" width="1" height="2" fill="#12d2f6"/><rect x="64" y="537" width="1" height="2" fill="#12d2f6"/><rect x="66" y="531" width="1" height="14" fill="#0a5670"/><rect x="66" y="531" width="1" height="2" fill="#12d2f6"/><rect x="66" y="537" width="1" height="2" fill="#12d2f6"/><rect x="68" y="531" width="1" height="14" fill="#0a5670"/><rect x="68" y="531" width="1" height="2" fill="#12d2f6"/><rect x="68" y="537" width="1" height="2" fill="#12d2f6"/><rect x="70" y="531" width="1" height="14" fill="#0a5670"/><rect x="70" y="533" width="1" height="4" fill="#12d2f6"/><rect x="73" y="531" width="1" height="14" fill="#0a5670"/><rect x="75" y="531" width="1" height="14" fill="#0a5670"/><rect x="75" y="531" width="1" height="2" fill="#12d2f6"/><rect x="75" y="543" width="1" height="2" fill="#12d2f6"/><rect x="77" y="531" width="1" height="14" fill="#0a5670"/><rect x="77" y="531" width="1" height="14" fill="#12d2f6"/><rect x="79" y="531" width="1" height="14" fill="#0a5670"/><rect x="79" y="531" width="1" height="2" fill="#12d2f6"/><rect x="79" y="543" width="1" height="2" fill="#12d2f6"/><rect x="81" y="531" width="1" height="14" fill="#0a5670"/><rect x="84" y="531" width="1" height="14" fill="#0a5670"/><rect x="84" y="531" width="1" height="14" fill="#12d2f6"/><rect x="86" y="531" width="1" height="14" fill="#0a5670"/><rect x="86" y="531" width="1" height="2" fill="#12d2f6"/><rect x="86" y="537" width="1" height="2" fill="#12d2f6"/><rect x="88" y="531" width="1" height="14" fill="#0a5670"/><rect x="88" y="531" width="1" height="2" fill="#12d2f6"/><rect x="88" y="537" width="1" height="2" fill="#12d2f6"/><rect x="90" y="531" width="1" height="14" fill="#0a5670"/><rect x="90" y="531" width="1" height="2" fill="#12d2f6"/><rect x="90" y="537" width="1" height="2" fill="#12d2f6"/><rect x="92" y="531" width="1" height="14" fill="#0a5670"/><rect x="92" y="531" width="1" height="2" fill="#12d2f6"/><rect x="95" y="531" width="1" height="14" fill="#0a5670"/><rect x="97" y="531" width="1" height="14" fill="#0a5670"/><rect x="99" y="531" width="1" height="14" fill="#0a5670"/><rect x="101" y="531" width="1" height="14" fill="#0a5670"/><rect x="103" y="531" width="1" height="14" fill="#0a5670"/><rect x="106" y="531" width="1" height="14" fill="#0a5670"/><rect x="106" y="531" width="1" height="2" fill="#12d2f6"/><rect x="108" y="531" width="1" height="14" fill="#0a5670"/><rect x="108" y="531" width="1" height="2" fill="#12d2f6"/><rect x="110" y="531" width="1" height="14" fill="#0a5670"/><rect x="110" y="531" width="1" height="14" fill="#12d2f6"/><rect x="112" y="531" width="1" height="14" fill="#0a5670"/><rect x="112" y="531" width="1" height="2" fill="#12d2f6"/><rect x="114" y="531" width="1" height="14" fill="#0a5670"/><rect x="114" y="531" width="1" height="2" fill="#12d2f6"/><rect x="117" y="531" width="1" height="14" fill="#0a5670"/><rect x="117" y="537" width="1" height="6" fill="#12d2f6"/><rect x="119" y="531" width="1" height="14" fill="#0a5670"/><rect x="119" y="535" width="1" height="2" fill="#12d2f6"/><rect x="119" y="539" width="1" height="2" fill="#12d2f6"/><rect x="119" y="543" width="1" height="2" fill="#12d2f6"/><rect x="121" y="531" width="1" height="14" fill="#0a5670"/><rect x="121" y="535" width="1" height="2" fill="#12d2f6"/><rect x="121" y="539" width="1" height="2" fill="#12d2f6"/><rect x="121" y="543" width="1" height="2" fill="#12d2f6"/><rect x="123" y="531" width="1" height="14" fill="#0a5670"/><rect x="123" y="535" width="1" height="2" fill="#12d2f6"/><rect x="123" y="539" width="1" height="2" fill="#12d2f6"/><rect x="123" y="543" width="1" height="2" fill="#12d2f6"/><rect x="125" y="531" width="1" height="14" fill="#0a5670"/><rect x="125" y="537" width="1" height="4" fill="#12d2f6"/><rect x="128" y="531" width="1" height="14" fill="#0a5670"/><rect x="128" y="537" width="1" height="2" fill="#12d2f6"/><rect x="128" y="543" width="1" height="2" fill="#12d2f6"/><rect x="130" y="531" width="1" height="14" fill="#0a5670"/><rect x="130" y="535" width="1" height="2" fill="#12d2f6"/><rect x="130" y="539" width="1" height="2" fill="#12d2f6"/><rect x="130" y="543" width="1" height="2" fill="#12d2f6"/><rect x="132" y="531" width="1" height="14" fill="#0a5670"/><rect x="132" y="535" width="1" height="2" fill="#12d2f6"/><rect x="132" y="539" width="1" height="2" fill="#12d2f6"/><rect x="132" y="543" width="1" height="2" fill="#12d2f6"/><rect x="134" y="531" width="1" height="14" fill="#0a5670"/><rect x="134" y="535" width="1" height="2" fill="#12d2f6"/><rect x="134" y="539" width="1" height="2" fill="#12d2f6"/><rect x="134" y="543" width="1" height="2" fill="#12d2f6"/><rect x="136" y="531" width="1" height="14" fill="#0a5670"/><rect x="136" y="541" width="1" height="2" fill="#12d2f6"/><rect x="139" y="531" width="1" height="14" fill="#0a5670"/><rect x="139" y="535" width="1" height="2" fill="#12d2f6"/><rect x="141" y="531" width="1" height="14" fill="#0a5670"/><rect x="141" y="531" width="1" height="12" fill="#12d2f6"/><rect x="143" y="531" width="1" height="14" fill="#0a5670"/><rect x="143" y="535" width="1" height="2" fill="#12d2f6"/><rect x="143" y="543" width="1" height="2" fill="#12d2f6"/><rect x="145" y="531" width="1" height="14" fill="#0a5670"/><rect x="145" y="543" width="1" height="2" fill="#12d2f6"/><rect x="147" y="531" width="1" height="14" fill="#0a5670"/><rect x="147" y="541" width="1" height="2" fill="#12d2f6"/><rect x="150" y="531" width="1" height="14" fill="#0a5670"/><rect x="152" y="531" width="1" height="14" fill="#0a5670"/><rect x="154" y="531" width="1" height="14" fill="#0a5670"/><rect x="156" y="531" width="1" height="14" fill="#0a5670"/><rect x="158" y="531" width="1" height="14" fill="#0a5670"/><rect x="161" y="531" width="1" height="14" fill="#0a5670"/><rect x="161" y="531" width="1" height="14" fill="#12d2f6"/><rect x="163" y="531" width="1" height="14" fill="#0a5670"/><rect x="163" y="531" width="1" height="2" fill="#12d2f6"/><rect x="163" y="537" width="1" height="2" fill="#12d2f6"/><rect x="165" y="531" width="1" height="14" fill="#0a5670"/><rect x="165" y="531" width="1" height="2" fill="#12d2f6"/><rect x="165" y="537" width="1" height="4" fill="#12d2f6"/><rect x="167" y="531" width="1" height="14" fill="#0a5670"/><rect x="167" y="531" width="1" height="2" fill="#12d2f6"/><rect x="167" y="537" width="1" height="2" fill="#12d2f6"/><rect x="167" y="541" width="1" height="2" fill="#12d2f6"/><rect x="169" y="531" width="1" height="14" fill="#0a5670"/><rect x="169" y="533" width="1" height="4" fill="#12d2f6"/><rect x="169" y="543" width="1" height="2" fill="#12d2f6"/><rect x="172" y="531" width="1" height="14" fill="#0a5670"/><rect x="172" y="535" width="1" height="8" fill="#12d2f6"/><rect x="174" y="531" width="1" height="14" fill="#0a5670"/><rect x="174" y="543" width="1" height="2" fill="#12d2f6"/><rect x="176" y="531" width="1" height="14" fill="#0a5670"/><rect x="176" y="543" width="1" height="2" fill="#12d2f6"/><rect x="178" y="531" width="1" height="14" fill="#0a5670"/><rect x="178" y="541" width="1" height="2" fill="#12d2f6"/><rect x="180" y="531" width="1" height="14" fill="#0a5670"/><rect x="180" y="535" width="1" height="10" fill="#12d2f6"/><rect x="183" y="531" width="1" height="14" fill="#0a5670"/><rect x="183" y="535" width="1" height="10" fill="#12d2f6"/><rect x="185" y="531" width="1" height="14" fill="#0a5670"/><rect x="185" y="537" width="1" height="2" fill="#12d2f6"/><rect x="187" y="531" width="1" height="14" fill="#0a5670"/><rect x="187" y="535" width="1" height="2" fill="#12d2f6"/><rect x="189" y="531" width="1" height="14" fill="#0a5670"/><rect x="189" y="535" width="1" height="2" fill="#12d2f6"/><rect x="191" y="531" width="1" height="14" fill="#0a5670"/><rect x="191" y="537" width="1" height="8" fill="#12d2f6"/><rect x="194" y="531" width="1" height="14" fill="#0a5670"/><rect x="194" y="535" width="1" height="10" fill="#12d2f6"/><rect x="196" y="531" width="1" height="14" fill="#0a5670"/><rect x="196" y="537" width="1" height="2" fill="#12d2f6"/><rect x="198" y="531" width="1" height="14" fill="#0a5670"/><rect x="198" y="535" width="1" height="2" fill="#12d2f6"/><rect x="200" y="531" width="1" height="14" fill="#0a5670"/><rect x="200" y="535" width="1" height="2" fill="#12d2f6"/><rect x="202" y="531" width="1" height="14" fill="#0a5670"/><rect x="202" y="537" width="1" height="8" fill="#12d2f6"/><rect x="205" y="531" width="1" height="14" fill="#0a5670"/><rect x="207" y="531" width="1" height="14" fill="#0a5670"/><rect x="207" y="535" width="1" height="2" fill="#12d2f6"/><rect x="207" y="543" width="1" height="2" fill="#12d2f6"/><rect x="209" y="531" width="1" height="14" fill="#0a5670"/><rect x="209" y="531" width="1" height="2" fill="#12d2f6"/><rect x="209" y="535" width="1" height="10" fill="#12d2f6"/><rect x="211" y="531" width="1" height="14" fill="#0a5670"/><rect x="211" y="543" width="1" height="2" fill="#12d2f6"/><rect x="213" y="531" width="1" height="14" fill="#0a5670"/><rect x="216" y="531" width="1" height="14" fill="#0a5670"/><rect x="216" y="535" width="1" height="10" fill="#12d2f6"/><rect x="218" y="531" width="1" height="14" fill="#0a5670"/><rect x="218" y="537" width="1" height="2" fill="#12d2f6"/><rect x="220" y="531" width="1" height="14" fill="#0a5670"/><rect x="220" y="535" width="1" height="2" fill="#12d2f6"/><rect x="222" y="531" width="1" height="14" fill="#0a5670"/><rect x="222" y="535" width="1" height="2" fill="#12d2f6"/><rect x="224" y="531" width="1" height="14" fill="#0a5670"/><rect x="224" y="537" width="1" height="8" fill="#12d2f6"/><rect x="227" y="531" width="1" height="14" fill="#0a5670"/><rect x="227" y="537" width="1" height="2" fill="#12d2f6"/><rect x="229" y="531" width="1" height="14" fill="#0a5670"/><rect x="229" y="535" width="1" height="2" fill="#12d2f6"/><rect x="229" y="539" width="1" height="2" fill="#12d2f6"/><rect x="229" y="543" width="1" height="2" fill="#12d2f6"/><rect x="231" y="531" width="1" height="14" fill="#0a5670"/><rect x="231" y="535" width="1" height="2" fill="#12d2f6"/><rect x="231" y="539" width="1" height="2" fill="#12d2f6"/><rect x="231" y="543" width="1" height="2" fill="#12d2f6"/><rect x="233" y="531" width="1" height="14" fill="#0a5670"/><rect x="233" y="535" width="1" height="2" fill="#12d2f6"/><rect x="233" y="539" width="1" height="2" fill="#12d2f6"/><rect x="233" y="543" width="1" height="2" fill="#12d2f6"/><rect x="235" y="531" width="1" height="14" fill="#0a5670"/><rect x="235" y="535" width="1" height="8" fill="#12d2f6"/><rect x="238" y="531" width="1" height="14" fill="#0a5670"/><rect x="240" y="531" width="1" height="14" fill="#0a5670"/><rect x="242" y="531" width="1" height="14" fill="#0a5670"/><rect x="244" y="531" width="1" height="14" fill="#0a5670"/><rect x="246" y="531" width="1" height="14" fill="#0a5670"/><rect x="249" y="531" width="1" height="14" fill="#0a5670"/><rect x="251" y="531" width="1" height="14" fill="#0a5670"/><rect x="253" y="531" width="1" height="14" fill="#0a5670"/><rect x="255" y="531" width="1" height="14" fill="#0a5670"/><rect x="257" y="531" width="1" height="14" fill="#0a5670"/><rect x="260" y="531" width="1" height="14" fill="#0a5670"/><rect x="262" y="531" width="1" height="14" fill="#0a5670"/><rect x="264" y="531" width="1" height="14" fill="#0a5670"/><rect x="266" y="531" width="1" height="14" fill="#0a5670"/><rect x="268" y="531" width="1" height="14" fill="#0a5670"/><rect x="271" y="531" width="1" height="14" fill="#0a5670"/><rect x="273" y="531" width="1" height="14" fill="#0a5670"/><rect x="275" y="531" width="1" height="14" fill="#0a5670"/><rect x="277" y="531" width="1" height="14" fill="#0a5670"/><rect x="279" y="531" width="1" height="14" fill="#0a5670"/><rect x="282" y="531" width="1" height="14" fill="#0a5670"/><rect x="284" y="531" width="1" height="14" fill="#0a5670"/><rect x="286" y="531" width="1" height="14" fill="#0a5670"/><rect x="288" y="531" width="1" height="14" fill="#0a5670"/><rect x="290" y="531" width="1" height="14" fill="#0a5670"/><rect x="293" y="531" width="1" height="14" fill="#0a5670"/><rect x="295" y="531" width="1" height="14" fill="#0a5670"/><rect x="297" y="531" width="1" height="14" fill="#0a5670"/><rect x="299" y="531" width="1" height="14" fill="#0a5670"/><rect x="301" y="531" width="1" height="14" fill="#0a5670"/><rect x="304" y="531" width="1" height="14" fill="#0a5670"/><rect x="306" y="531" width="1" height="14" fill="#0a5670"/><rect x="308" y="531" width="1" height="14" fill="#0a5670"/><rect x="310" y="531" width="1" height="14" fill="#0a5670"/><rect x="312" y="531" width="1" height="14" fill="#0a5670"/><rect x="315" y="531" width="1" height="14" fill="#0a5670"/><rect x="317" y="531" width="1" height="14" fill="#0a5670"/><rect x="319" y="531" width="1" height="14" fill="#0a5670"/><rect x="321" y="531" width="1" height="14" fill="#0a5670"/><rect x="323" y="531" width="1" height="14" fill="#0a5670"/><rect x="326" y="531" width="1" height="14" fill="#0a5670"/><rect x="328" y="531" width="1" height="14" fill="#0a5670"/><rect x="330" y="531" width="1" height="14" fill="#0a5670"/><rect x="332" y="531" width="1" height="14" fill="#0a5670"/><rect x="334" y="531" width="1" height="14" fill="#0a5670"/><rect x="337" y="531" width="1" height="14" fill="#0a5670"/><rect x="339" y="531" width="1" height="14" fill="#0a5670"/><rect x="341" y="531" width="1" height="14" fill="#0a5670"/><rect x="343" y="531" width="1" height="14" fill="#0a5670"/><rect x="345" y="531" width="1" height="14" fill="#0a5670"/><rect x="348" y="531" width="1" height="14" fill="#0a5670"/><rect x="350" y="531" width="1" height="14" fill="#0a5670"/><rect x="352" y="531" width="1" height="14" fill="#0a5670"/><rect x="354" y="531" width="1" height="14" fill="#0a5670"/><rect x="356" y="531" width="1" height="14" fill="#0a5670"/><rect x="359" y="531" width="1" height="14" fill="#0a5670"/><rect x="361" y="531" width="1" height="14" fill="#0a5670"/><rect x="363" y="531" width="1" height="14" fill="#0a5670"/><rect x="365" y="531" width="1" height="14" fill="#0a5670"/><rect x="367" y="531" width="1" height="14" fill="#0a5670"/><rect x="370" y="531" width="1" height="14" fill="#0a5670"/><rect x="372" y="531" width="1" height="14" fill="#0a5670"/><rect x="374" y="531" width="1" height="14" fill="#0a5670"/><rect x="376" y="531" width="1" height="14" fill="#0a5670"/><rect x="378" y="531" width="1" height="14" fill="#0a5670"/><rect x="381" y="531" width="1" height="14" fill="#0a5670"/><rect x="383" y="531" width="1" height="14" fill="#0a5670"/><rect x="385" y="531" width="1" height="14" fill="#0a5670"/><rect x="387" y="531" width="1" height="14" fill="#0a5670"/><rect x="389" y="531" width="1" height="14" fill="#0a5670"/><rect x="392" y="531" width="1" height="14" fill="#0a5670"/><rect x="394" y="531" width="1" height="14" fill="#0a5670"/><rect x="396" y="531" width="1" height="14" fill="#0a5670"/><rect x="398" y="531" width="1" height="14" fill="#0a5670"/><rect x="400" y="531" width="1" height="14" fill="#0a5670"/><rect x="403" y="531" width="1" height="14" fill="#0a5670"/><rect x="405" y="531" width="1" height="14" fill="#0a5670"/><rect x="407" y="531" width="1" height="14" fill="#0a5670"/><rect x="409" y="531" width="1" height="14" fill="#0a5670"/><rect x="411" y="531" width="1" height="14" fill="#0a5670"/><rect x="414" y="531" width="1" height="14" fill="#0a5670"/><rect x="416" y="531" width="1" height="14" fill="#0a5670"/><rect x="418" y="531" width="1" height="14" fill="#0a5670"/><rect x="420" y="531" width="1" height="14" fill="#0a5670"/><rect x="422" y="531" width="1" height="14" fill="#0a5670"/><rect x="425" y="531" width="1" height="14" fill="#0a5670"/><rect x="427" y="531" width="1" height="14" fill="#0a5670"/><rect x="429" y="531" width="1" height="14" fill="#0a5670"/><rect x="431" y="531" width="1" height="14" fill="#0a5670"/><rect x="433" y="531" width="1" height="14" fill="#0a5670"/><rect x="436" y="531" width="1" height="14" fill="#0a5670"/><rect x="438" y="531" width="1" height="14" fill="#0a5670"/><rect x="440" y="531" width="1" height="14" fill="#0a5670"/><rect x="442" y="531" width="1" height="14" fill="#0a5670"/><rect x="444" y="531" width="1" height="14" fill="#0a5670"/><rect x="447" y="531" width="1" height="14" fill="#0a5670"/><rect x="449" y="531" width="1" height="14" fill="#0a5670"/><rect x="451" y="531" width="1" height="14" fill="#0a5670"/><rect x="453" y="531" width="1" height="14" fill="#0a5670"/><rect x="455" y="531" width="1" height="14" fill="#0a5670"/><rect x="458" y="531" width="1" height="14" fill="#0a5670"/><rect x="460" y="531" width="1" height="14" fill="#0a5670"/><rect x="462" y="531" width="1" height="14" fill="#0a5670"/><rect x="464" y="531" width="1" height="14" fill="#0a5670"/><rect x="466" y="531" width="1" height="14" fill="#0a5670"/></svg><div style="position:absolute;left:516px;top:49px;width:218px;height:151px;border:1px solid #fff;box-sizing:border-box"></div><div style="position:absolute;left:515px;top:48px;width:219px;height:152px;border:1px solid #aca899;box-sizing:border-box"></div><div class="t" style="left:522px;top:41px;padding:0 2px;background:#ece9d8">PI Errors &amp; Speed</div><div class="t" style="left:522px;top:68px;color:#000;font-weight:normal;">MID Code</div><div style="position:absolute;left:587px;top:64px;width:140px;height:20px;background:#ece9d8;box-shadow:inset 1px 1px 0 #aca899, inset -1px -1px 0 #fff, inset 2px 2px 0 #716f64, inset -2px -2px 0 #f1efe2"></div><div class="t" style="left:588px;width:140px;text-align:center;top:67px">TYG02</div><div class="t" style="left:522px;top:92px;color:#000;font-weight:normal;">Type/Book</div><div style="position:absolute;left:587px;top:88px;width:71px;height:20px;background:#ece9d8;box-shadow:inset 1px 1px 0 #aca899, inset -1px -1px 0 #fff, inset 2px 2px 0 #716f64, inset -2px -2px 0 #f1efe2"></div><div style="position:absolute;left:658px;top:88px;width:71px;height:20px;background:#ece9d8;box-shadow:inset 1px 1px 0 #aca899, inset -1px -1px 0 #fff, inset 2px 2px 0 #716f64, inset -2px -2px 0 #f1efe2"></div><div class="t" style="left:588px;width:71px;text-align:center;top:91px">DVD-R</div><div class="t" style="left:659px;width:71px;text-align:center;top:91px">DVD-R</div><svg style="position:absolute;left:530px;top:116px" width="17" height="17" shape-rendering="crispEdges"><rect x="5" y="0" width="5" height="1" fill="#000"/><rect x="3" y="1" width="2" height="1" fill="#000"/><rect x="10" y="1" width="2" height="1" fill="#000"/><rect x="2" y="2" width="1" height="1" fill="#000"/><rect x="12" y="2" width="1" height="1" fill="#000"/><rect x="1" y="3" width="1" height="1" fill="#000"/><rect x="13" y="3" width="1" height="1" fill="#000"/><rect x="1" y="4" width="1" height="1" fill="#000"/><rect x="13" y="4" width="1" height="1" fill="#000"/><rect x="0" y="5" width="1" height="1" fill="#000"/><rect x="14" y="5" width="1" height="1" fill="#000"/><rect x="0" y="6" width="1" height="1" fill="#000"/><rect x="14" y="6" width="1" height="1" fill="#000"/><rect x="0" y="7" width="1" height="1" fill="#000"/><rect x="14" y="7" width="1" height="1" fill="#000"/><rect x="0" y="8" width="1" height="1" fill="#000"/><rect x="14" y="8" width="1" height="1" fill="#000"/><rect x="0" y="9" width="1" height="1" fill="#000"/><rect x="14" y="9" width="1" height="1" fill="#000"/><rect x="1" y="10" width="1" height="1" fill="#000"/><rect x="13" y="10" width="1" height="1" fill="#000"/><rect x="1" y="11" width="1" height="1" fill="#000"/><rect x="13" y="11" width="1" height="1" fill="#000"/><rect x="2" y="12" width="1" height="1" fill="#000"/><rect x="12" y="12" width="1" height="1" fill="#000"/><rect x="3" y="13" width="2" height="1" fill="#000"/><rect x="10" y="13" width="2" height="1" fill="#000"/><rect x="5" y="14" width="5" height="1" fill="#000"/><rect x="5" y="1" width="5" height="1" fill="#00e000"/><rect x="3" y="2" width="9" height="1" fill="#00e000"/><rect x="2" y="3" width="11" height="1" fill="#00e000"/><rect x="2" y="4" width="11" height="1" fill="#00e000"/><rect x="1" y="5" width="13" height="1" fill="#00e000"/><rect x="1" y="6" width="13" height="1" fill="#00e000"/><rect x="1" y="7" width="13" height="1" fill="#00e000"/><rect x="1" y="8" width="13" height="1" fill="#00e000"/><rect x="1" y="9" width="13" height="1" fill="#00e000"/><rect x="2" y="10" width="11" height="1" fill="#00e000"/><rect x="2" y="11" width="11" height="1" fill="#00e000"/><rect x="3" y="12" width="9" height="1" fill="#00e000"/><rect x="5" y="13" width="5" height="1" fill="#00e000"/><rect x="4" y="6" width="1" height="1" fill="#fff"/><rect x="4" y="7" width="1" height="1" fill="#fff"/><rect x="5" y="5" width="1" height="1" fill="#fff"/><rect x="5" y="6" width="1" height="1" fill="#fff"/><rect x="6" y="4" width="1" height="1" fill="#fff"/><rect x="6" y="5" width="1" height="1" fill="#fff"/><rect x="7" y="4" width="1" height="1" fill="#fff"/></svg><div class="t" style="left:550px;top:117px;color:#000;font-weight:normal;">Show PIE</div><svg style="position:absolute;left:616px;top:118px" width="12" height="12" shape-rendering="crispEdges"><rect x="4" y="2" width="4" height="1" fill="#fff"/><rect x="3" y="3" width="6" height="1" fill="#fff"/><rect x="2" y="4" width="8" height="1" fill="#fff"/><rect x="2" y="5" width="8" height="1" fill="#fff"/><rect x="2" y="6" width="8" height="1" fill="#fff"/><rect x="2" y="7" width="8" height="1" fill="#fff"/><rect x="3" y="8" width="6" height="1" fill="#fff"/><rect x="4" y="9" width="4" height="1" fill="#fff"/><rect x="4" y="0" width="1" height="1" fill="#aca899"/><rect x="5" y="0" width="1" height="1" fill="#aca899"/><rect x="6" y="0" width="1" height="1" fill="#aca899"/><rect x="7" y="0" width="1" height="1" fill="#aca899"/><rect x="2" y="1" width="1" height="1" fill="#aca899"/><rect x="3" y="1" width="1" height="1" fill="#aca899"/><rect x="8" y="1" width="1" height="1" fill="#aca899"/><rect x="9" y="1" width="1" height="1" fill="#aca899"/><rect x="1" y="2" width="1" height="1" fill="#aca899"/><rect x="10" y="2" width="1" height="1" fill="#fff"/><rect x="1" y="3" width="1" height="1" fill="#aca899"/><rect x="10" y="3" width="1" height="1" fill="#fff"/><rect x="0" y="4" width="1" height="1" fill="#aca899"/><rect x="11" y="4" width="1" height="1" fill="#fff"/><rect x="0" y="5" width="1" height="1" fill="#aca899"/><rect x="11" y="5" width="1" height="1" fill="#fff"/><rect x="0" y="6" width="1" height="1" fill="#aca899"/><rect x="11" y="6" width="1" height="1" fill="#fff"/><rect x="0" y="7" width="1" height="1" fill="#aca899"/><rect x="11" y="7" width="1" height="1" fill="#fff"/><rect x="1" y="8" width="1" height="1" fill="#aca899"/><rect x="10" y="8" width="1" height="1" fill="#fff"/><rect x="1" y="9" width="1" height="1" fill="#aca899"/><rect x="10" y="9" width="1" height="1" fill="#fff"/><rect x="2" y="10" width="1" height="1" fill="#fff"/><rect x="3" y="10" width="1" height="1" fill="#fff"/><rect x="8" y="10" width="1" height="1" fill="#fff"/><rect x="9" y="10" width="1" height="1" fill="#fff"/><rect x="4" y="11" width="1" height="1" fill="#fff"/><rect x="5" y="11" width="1" height="1" fill="#fff"/><rect x="6" y="11" width="1" height="1" fill="#fff"/><rect x="7" y="11" width="1" height="1" fill="#fff"/><rect x="4" y="1" width="1" height="1" fill="#716f64"/><rect x="5" y="1" width="1" height="1" fill="#716f64"/><rect x="6" y="1" width="1" height="1" fill="#716f64"/><rect x="7" y="1" width="1" height="1" fill="#716f64"/><rect x="2" y="2" width="1" height="1" fill="#716f64"/><rect x="3" y="2" width="1" height="1" fill="#716f64"/><rect x="8" y="2" width="1" height="1" fill="#716f64"/><rect x="9" y="2" width="1" height="1" fill="#f1efe2"/><rect x="2" y="3" width="1" height="1" fill="#716f64"/><rect x="9" y="3" width="1" height="1" fill="#f1efe2"/><rect x="1" y="4" width="1" height="1" fill="#716f64"/><rect x="10" y="4" width="1" height="1" fill="#f1efe2"/><rect x="1" y="5" width="1" height="1" fill="#716f64"/><rect x="10" y="5" width="1" height="1" fill="#f1efe2"/><rect x="1" y="6" width="1" height="1" fill="#716f64"/><rect x="10" y="6" width="1" height="1" fill="#f1efe2"/><rect x="1" y="7" width="1" height="1" fill="#716f64"/><rect x="10" y="7" width="1" height="1" fill="#f1efe2"/><rect x="2" y="8" width="1" height="1" fill="#716f64"/><rect x="9" y="8" width="1" height="1" fill="#f1efe2"/><rect x="2" y="9" width="1" height="1" fill="#f1efe2"/><rect x="3" y="9" width="1" height="1" fill="#f1efe2"/><rect x="8" y="9" width="1" height="1" fill="#f1efe2"/><rect x="9" y="9" width="1" height="1" fill="#f1efe2"/><rect x="4" y="10" width="1" height="1" fill="#f1efe2"/><rect x="5" y="10" width="1" height="1" fill="#f1efe2"/><rect x="6" y="10" width="1" height="1" fill="#f1efe2"/><rect x="7" y="10" width="1" height="1" fill="#f1efe2"/></svg><div class="t" style="left:633px;top:117px;color:#000;font-weight:normal;">Line</div><svg style="position:absolute;left:671px;top:118px" width="12" height="12" shape-rendering="crispEdges"><rect x="4" y="2" width="4" height="1" fill="#fff"/><rect x="3" y="3" width="6" height="1" fill="#fff"/><rect x="2" y="4" width="8" height="1" fill="#fff"/><rect x="2" y="5" width="8" height="1" fill="#fff"/><rect x="2" y="6" width="8" height="1" fill="#fff"/><rect x="2" y="7" width="8" height="1" fill="#fff"/><rect x="3" y="8" width="6" height="1" fill="#fff"/><rect x="4" y="9" width="4" height="1" fill="#fff"/><rect x="4" y="0" width="1" height="1" fill="#aca899"/><rect x="5" y="0" width="1" height="1" fill="#aca899"/><rect x="6" y="0" width="1" height="1" fill="#aca899"/><rect x="7" y="0" width="1" height="1" fill="#aca899"/><rect x="2" y="1" width="1" height="1" fill="#aca899"/><rect x="3" y="1" width="1" height="1" fill="#aca899"/><rect x="8" y="1" width="1" height="1" fill="#aca899"/><rect x="9" y="1" width="1" height="1" fill="#aca899"/><rect x="1" y="2" width="1" height="1" fill="#aca899"/><rect x="10" y="2" width="1" height="1" fill="#fff"/><rect x="1" y="3" width="1" height="1" fill="#aca899"/><rect x="10" y="3" width="1" height="1" fill="#fff"/><rect x="0" y="4" width="1" height="1" fill="#aca899"/><rect x="11" y="4" width="1" height="1" fill="#fff"/><rect x="0" y="5" width="1" height="1" fill="#aca899"/><rect x="11" y="5" width="1" height="1" fill="#fff"/><rect x="0" y="6" width="1" height="1" fill="#aca899"/><rect x="11" y="6" width="1" height="1" fill="#fff"/><rect x="0" y="7" width="1" height="1" fill="#aca899"/><rect x="11" y="7" width="1" height="1" fill="#fff"/><rect x="1" y="8" width="1" height="1" fill="#aca899"/><rect x="10" y="8" width="1" height="1" fill="#fff"/><rect x="1" y="9" width="1" height="1" fill="#aca899"/><rect x="10" y="9" width="1" height="1" fill="#fff"/><rect x="2" y="10" width="1" height="1" fill="#fff"/><rect x="3" y="10" width="1" height="1" fill="#fff"/><rect x="8" y="10" width="1" height="1" fill="#fff"/><rect x="9" y="10" width="1" height="1" fill="#fff"/><rect x="4" y="11" width="1" height="1" fill="#fff"/><rect x="5" y="11" width="1" height="1" fill="#fff"/><rect x="6" y="11" width="1" height="1" fill="#fff"/><rect x="7" y="11" width="1" height="1" fill="#fff"/><rect x="4" y="1" width="1" height="1" fill="#716f64"/><rect x="5" y="1" width="1" height="1" fill="#716f64"/><rect x="6" y="1" width="1" height="1" fill="#716f64"/><rect x="7" y="1" width="1" height="1" fill="#716f64"/><rect x="2" y="2" width="1" height="1" fill="#716f64"/><rect x="3" y="2" width="1" height="1" fill="#716f64"/><rect x="8" y="2" width="1" height="1" fill="#716f64"/><rect x="9" y="2" width="1" height="1" fill="#f1efe2"/><rect x="2" y="3" width="1" height="1" fill="#716f64"/><rect x="9" y="3" width="1" height="1" fill="#f1efe2"/><rect x="1" y="4" width="1" height="1" fill="#716f64"/><rect x="10" y="4" width="1" height="1" fill="#f1efe2"/><rect x="1" y="5" width="1" height="1" fill="#716f64"/><rect x="10" y="5" width="1" height="1" fill="#f1efe2"/><rect x="1" y="6" width="1" height="1" fill="#716f64"/><rect x="10" y="6" width="1" height="1" fill="#f1efe2"/><rect x="1" y="7" width="1" height="1" fill="#716f64"/><rect x="10" y="7" width="1" height="1" fill="#f1efe2"/><rect x="2" y="8" width="1" height="1" fill="#716f64"/><rect x="9" y="8" width="1" height="1" fill="#f1efe2"/><rect x="2" y="9" width="1" height="1" fill="#f1efe2"/><rect x="3" y="9" width="1" height="1" fill="#f1efe2"/><rect x="8" y="9" width="1" height="1" fill="#f1efe2"/><rect x="9" y="9" width="1" height="1" fill="#f1efe2"/><rect x="4" y="10" width="1" height="1" fill="#f1efe2"/><rect x="5" y="10" width="1" height="1" fill="#f1efe2"/><rect x="6" y="10" width="1" height="1" fill="#f1efe2"/><rect x="7" y="10" width="1" height="1" fill="#f1efe2"/><rect x="5" y="4" width="2" height="1" fill="#000"/><rect x="4" y="5" width="4" height="2" fill="#000"/><rect x="5" y="7" width="2" height="1" fill="#000"/></svg><div class="t" style="left:688px;top:117px;color:#000;font-weight:normal;">Block</div><svg style="position:absolute;left:530px;top:135px" width="17" height="17" shape-rendering="crispEdges"><rect x="5" y="0" width="5" height="1" fill="#000"/><rect x="3" y="1" width="2" height="1" fill="#000"/><rect x="10" y="1" width="2" height="1" fill="#000"/><rect x="2" y="2" width="1" height="1" fill="#000"/><rect x="12" y="2" width="1" height="1" fill="#000"/><rect x="1" y="3" width="1" height="1" fill="#000"/><rect x="13" y="3" width="1" height="1" fill="#000"/><rect x="1" y="4" width="1" height="1" fill="#000"/><rect x="13" y="4" width="1" height="1" fill="#000"/><rect x="0" y="5" width="1" height="1" fill="#000"/><rect x="14" y="5" width="1" height="1" fill="#000"/><rect x="0" y="6" width="1" height="1" fill="#000"/><rect x="14" y="6" width="1" height="1" fill="#000"/><rect x="0" y="7" width="1" height="1" fill="#000"/><rect x="14" y="7" width="1" height="1" fill="#000"/><rect x="0" y="8" width="1" height="1" fill="#000"/><rect x="14" y="8" width="1" height="1" fill="#000"/><rect x="0" y="9" width="1" height="1" fill="#000"/><rect x="14" y="9" width="1" height="1" fill="#000"/><rect x="1" y="10" width="1" height="1" fill="#000"/><rect x="13" y="10" width="1" height="1" fill="#000"/><rect x="1" y="11" width="1" height="1" fill="#000"/><rect x="13" y="11" width="1" height="1" fill="#000"/><rect x="2" y="12" width="1" height="1" fill="#000"/><rect x="12" y="12" width="1" height="1" fill="#000"/><rect x="3" y="13" width="2" height="1" fill="#000"/><rect x="10" y="13" width="2" height="1" fill="#000"/><rect x="5" y="14" width="5" height="1" fill="#000"/><rect x="5" y="1" width="5" height="1" fill="#f86000"/><rect x="3" y="2" width="9" height="1" fill="#f86000"/><rect x="2" y="3" width="11" height="1" fill="#f86000"/><rect x="2" y="4" width="11" height="1" fill="#f86000"/><rect x="1" y="5" width="13" height="1" fill="#f86000"/><rect x="1" y="6" width="13" height="1" fill="#f86000"/><rect x="1" y="7" width="13" height="1" fill="#f86000"/><rect x="1" y="8" width="13" height="1" fill="#f86000"/><rect x="1" y="9" width="13" height="1" fill="#f86000"/><rect x="2" y="10" width="11" height="1" fill="#f86000"/><rect x="2" y="11" width="11" height="1" fill="#f86000"/><rect x="3" y="12" width="9" height="1" fill="#f86000"/><rect x="5" y="13" width="5" height="1" fill="#f86000"/><rect x="4" y="6" width="1" height="1" fill="#fff"/><rect x="4" y="7" width="1" height="1" fill="#fff"/><rect x="5" y="5" width="1" height="1" fill="#fff"/><rect x="5" y="6" width="1" height="1" fill="#fff"/><rect x="6" y="4" width="1" height="1" fill="#fff"/><rect x="6" y="5" width="1" height="1" fill="#fff"/><rect x="7" y="4" width="1" height="1" fill="#fff"/></svg><div class="t" style="left:549px;top:136px;color:#000;font-weight:normal;">Show Speed</div><div class="t" style="left:527px;top:157px;color:#000;font-weight:normal;">PIE Scale (Left)</div><div style="position:absolute;left:628px;top:152px;width:79px;height:21px;background:#fff;box-shadow:inset 1px 1px 0 #aca899, inset -1px -1px 0 #fff, inset 2px 2px 0 #716f64, inset -2px -2px 0 #fff"></div><div style="position:absolute;left:689px;top:154px;width:17px;height:18px;background:#ece9d8;box-shadow:inset 1px 1px 0 #ece9d8, inset -1px -1px 0 #716f64, inset 2px 2px 0 #fff, inset -2px -2px 0 #aca899"></div><svg style="position:absolute;left:694px;top:161px" width="7" height="4"><path d="M0 0 H7 L3.5 4 Z" fill="#000"/></svg><div class="t" style="left:633px;top:156px;color:#000;font-weight:normal;">Auto Peak</div><div class="t" style="left:528px;top:180px;color:#000;font-weight:normal;">Speed / Accuracy</div><div style="position:absolute;left:628px;top:176px;width:79px;height:21px;background:#fff;box-shadow:inset 1px 1px 0 #aca899, inset -1px -1px 0 #fff, inset 2px 2px 0 #716f64, inset -2px -2px 0 #fff"></div><div style="position:absolute;left:689px;top:178px;width:17px;height:18px;background:#ece9d8;box-shadow:inset 1px 1px 0 #ece9d8, inset -1px -1px 0 #716f64, inset 2px 2px 0 #fff, inset -2px -2px 0 #aca899"></div><svg style="position:absolute;left:694px;top:185px" width="7" height="4"><path d="M0 0 H7 L3.5 4 Z" fill="#000"/></svg><div class="t" style="left:633px;top:180px;color:#000;font-weight:normal;">Accuracy</div><div style="position:absolute;left:516px;top:209px;width:218px;height:151px;border:1px solid #fff;box-sizing:border-box"></div><div style="position:absolute;left:515px;top:208px;width:219px;height:152px;border:1px solid #aca899;box-sizing:border-box"></div><div class="t" style="left:522px;top:201px;padding:0 2px;background:#ece9d8">PIF Errors</div><svg style="position:absolute;left:530px;top:224px" width="17" height="17" shape-rendering="crispEdges"><rect x="11" y="2" width="2" height="1" fill="#fff"/><rect x="13" y="3" width="1" height="1" fill="#fff"/><rect x="14" y="4" width="1" height="1" fill="#fff"/><rect x="14" y="5" width="1" height="1" fill="#fff"/><rect x="15" y="6" width="1" height="1" fill="#fff"/><rect x="15" y="7" width="1" height="1" fill="#fff"/><rect x="15" y="8" width="1" height="1" fill="#fff"/><rect x="15" y="9" width="1" height="1" fill="#fff"/><rect x="15" y="10" width="1" height="1" fill="#fff"/><rect x="14" y="11" width="1" height="1" fill="#fff"/><rect x="2" y="12" width="1" height="1" fill="#fff"/><rect x="14" y="12" width="1" height="1" fill="#fff"/><rect x="3" y="13" width="1" height="1" fill="#fff"/><rect x="13" y="13" width="1" height="1" fill="#fff"/><rect x="4" y="14" width="2" height="1" fill="#fff"/><rect x="11" y="14" width="2" height="1" fill="#fff"/><rect x="6" y="15" width="5" height="1" fill="#fff"/><rect x="5" y="0" width="5" height="1" fill="#aca899"/><rect x="3" y="1" width="2" height="1" fill="#aca899"/><rect x="10" y="1" width="2" height="1" fill="#aca899"/><rect x="2" y="2" width="1" height="1" fill="#aca899"/><rect x="12" y="2" width="1" height="1" fill="#aca899"/><rect x="1" y="3" width="1" height="1" fill="#aca899"/><rect x="13" y="3" width="1" height="1" fill="#aca899"/><rect x="1" y="4" width="1" height="1" fill="#aca899"/><rect x="13" y="4" width="1" height="1" fill="#aca899"/><rect x="0" y="5" width="1" height="1" fill="#aca899"/><rect x="14" y="5" width="1" height="1" fill="#aca899"/><rect x="0" y="6" width="1" height="1" fill="#aca899"/><rect x="14" y="6" width="1" height="1" fill="#aca899"/><rect x="0" y="7" width="1" height="1" fill="#aca899"/><rect x="14" y="7" width="1" height="1" fill="#aca899"/><rect x="0" y="8" width="1" height="1" fill="#aca899"/><rect x="14" y="8" width="1" height="1" fill="#aca899"/><rect x="0" y="9" width="1" height="1" fill="#aca899"/><rect x="14" y="9" width="1" height="1" fill="#aca899"/><rect x="1" y="10" width="1" height="1" fill="#aca899"/><rect x="13" y="10" width="1" height="1" fill="#aca899"/><rect x="1" y="11" width="1" height="1" fill="#aca899"/><rect x="13" y="11" width="1" height="1" fill="#aca899"/><rect x="2" y="12" width="1" height="1" fill="#aca899"/><rect x="12" y="12" width="1" height="1" fill="#aca899"/><rect x="3" y="13" width="2" height="1" fill="#aca899"/><rect x="10" y="13" width="2" height="1" fill="#aca899"/><rect x="5" y="14" width="5" height="1" fill="#aca899"/><rect x="5" y="1" width="5" height="1" fill="#aca899"/><rect x="3" y="2" width="9" height="1" fill="#aca899"/><rect x="2" y="3" width="11" height="1" fill="#aca899"/><rect x="2" y="4" width="11" height="1" fill="#aca899"/><rect x="1" y="5" width="13" height="1" fill="#aca899"/><rect x="1" y="6" width="13" height="1" fill="#aca899"/><rect x="1" y="7" width="13" height="1" fill="#aca899"/><rect x="1" y="8" width="13" height="1" fill="#aca899"/><rect x="1" y="9" width="13" height="1" fill="#aca899"/><rect x="2" y="10" width="11" height="1" fill="#aca899"/><rect x="2" y="11" width="11" height="1" fill="#aca899"/><rect x="3" y="12" width="9" height="1" fill="#aca899"/><rect x="5" y="13" width="5" height="1" fill="#aca899"/><rect x="4" y="6" width="1" height="1" fill="#fff"/><rect x="4" y="7" width="1" height="1" fill="#fff"/><rect x="5" y="5" width="1" height="1" fill="#fff"/><rect x="5" y="6" width="1" height="1" fill="#fff"/><rect x="6" y="4" width="1" height="1" fill="#fff"/><rect x="6" y="5" width="1" height="1" fill="#fff"/><rect x="7" y="4" width="1" height="1" fill="#fff"/></svg><div class="t" style="left:549px;top:225px;color:#fff;font-weight:normal;">Show Jitter</div><div class="t" style="left:548px;top:224px;color:#aca899;font-weight:normal;">Show Jitter</div><svg style="position:absolute;left:616px;top:225px" width="12" height="12" shape-rendering="crispEdges"><rect x="4" y="2" width="4" height="1" fill="#fff"/><rect x="3" y="3" width="6" height="1" fill="#fff"/><rect x="2" y="4" width="8" height="1" fill="#fff"/><rect x="2" y="5" width="8" height="1" fill="#fff"/><rect x="2" y="6" width="8" height="1" fill="#fff"/><rect x="2" y="7" width="8" height="1" fill="#fff"/><rect x="3" y="8" width="6" height="1" fill="#fff"/><rect x="4" y="9" width="4" height="1" fill="#fff"/><rect x="4" y="0" width="1" height="1" fill="#aca899"/><rect x="5" y="0" width="1" height="1" fill="#aca899"/><rect x="6" y="0" width="1" height="1" fill="#aca899"/><rect x="7" y="0" width="1" height="1" fill="#aca899"/><rect x="2" y="1" width="1" height="1" fill="#aca899"/><rect x="3" y="1" width="1" height="1" fill="#aca899"/><rect x="8" y="1" width="1" height="1" fill="#aca899"/><rect x="9" y="1" width="1" height="1" fill="#aca899"/><rect x="1" y="2" width="1" height="1" fill="#aca899"/><rect x="10" y="2" width="1" height="1" fill="#fff"/><rect x="1" y="3" width="1" height="1" fill="#aca899"/><rect x="10" y="3" width="1" height="1" fill="#fff"/><rect x="0" y="4" width="1" height="1" fill="#aca899"/><rect x="11" y="4" width="1" height="1" fill="#fff"/><rect x="0" y="5" width="1" height="1" fill="#aca899"/><rect x="11" y="5" width="1" height="1" fill="#fff"/><rect x="0" y="6" width="1" height="1" fill="#aca899"/><rect x="11" y="6" width="1" height="1" fill="#fff"/><rect x="0" y="7" width="1" height="1" fill="#aca899"/><rect x="11" y="7" width="1" height="1" fill="#fff"/><rect x="1" y="8" width="1" height="1" fill="#aca899"/><rect x="10" y="8" width="1" height="1" fill="#fff"/><rect x="1" y="9" width="1" height="1" fill="#aca899"/><rect x="10" y="9" width="1" height="1" fill="#fff"/><rect x="2" y="10" width="1" height="1" fill="#fff"/><rect x="3" y="10" width="1" height="1" fill="#fff"/><rect x="8" y="10" width="1" height="1" fill="#fff"/><rect x="9" y="10" width="1" height="1" fill="#fff"/><rect x="4" y="11" width="1" height="1" fill="#fff"/><rect x="5" y="11" width="1" height="1" fill="#fff"/><rect x="6" y="11" width="1" height="1" fill="#fff"/><rect x="7" y="11" width="1" height="1" fill="#fff"/><rect x="4" y="1" width="1" height="1" fill="#716f64"/><rect x="5" y="1" width="1" height="1" fill="#716f64"/><rect x="6" y="1" width="1" height="1" fill="#716f64"/><rect x="7" y="1" width="1" height="1" fill="#716f64"/><rect x="2" y="2" width="1" height="1" fill="#716f64"/><rect x="3" y="2" width="1" height="1" fill="#716f64"/><rect x="8" y="2" width="1" height="1" fill="#716f64"/><rect x="9" y="2" width="1" height="1" fill="#f1efe2"/><rect x="2" y="3" width="1" height="1" fill="#716f64"/><rect x="9" y="3" width="1" height="1" fill="#f1efe2"/><rect x="1" y="4" width="1" height="1" fill="#716f64"/><rect x="10" y="4" width="1" height="1" fill="#f1efe2"/><rect x="1" y="5" width="1" height="1" fill="#716f64"/><rect x="10" y="5" width="1" height="1" fill="#f1efe2"/><rect x="1" y="6" width="1" height="1" fill="#716f64"/><rect x="10" y="6" width="1" height="1" fill="#f1efe2"/><rect x="1" y="7" width="1" height="1" fill="#716f64"/><rect x="10" y="7" width="1" height="1" fill="#f1efe2"/><rect x="2" y="8" width="1" height="1" fill="#716f64"/><rect x="9" y="8" width="1" height="1" fill="#f1efe2"/><rect x="2" y="9" width="1" height="1" fill="#f1efe2"/><rect x="3" y="9" width="1" height="1" fill="#f1efe2"/><rect x="8" y="9" width="1" height="1" fill="#f1efe2"/><rect x="9" y="9" width="1" height="1" fill="#f1efe2"/><rect x="4" y="10" width="1" height="1" fill="#f1efe2"/><rect x="5" y="10" width="1" height="1" fill="#f1efe2"/><rect x="6" y="10" width="1" height="1" fill="#f1efe2"/><rect x="7" y="10" width="1" height="1" fill="#f1efe2"/></svg><div class="t" style="left:633px;top:224px;color:#000;font-weight:normal;">Instant</div><svg style="position:absolute;left:671px;top:225px" width="12" height="12" shape-rendering="crispEdges"><rect x="4" y="2" width="4" height="1" fill="#fff"/><rect x="3" y="3" width="6" height="1" fill="#fff"/><rect x="2" y="4" width="8" height="1" fill="#fff"/><rect x="2" y="5" width="8" height="1" fill="#fff"/><rect x="2" y="6" width="8" height="1" fill="#fff"/><rect x="2" y="7" width="8" height="1" fill="#fff"/><rect x="3" y="8" width="6" height="1" fill="#fff"/><rect x="4" y="9" width="4" height="1" fill="#fff"/><rect x="4" y="0" width="1" height="1" fill="#aca899"/><rect x="5" y="0" width="1" height="1" fill="#aca899"/><rect x="6" y="0" width="1" height="1" fill="#aca899"/><rect x="7" y="0" width="1" height="1" fill="#aca899"/><rect x="2" y="1" width="1" height="1" fill="#aca899"/><rect x="3" y="1" width="1" height="1" fill="#aca899"/><rect x="8" y="1" width="1" height="1" fill="#aca899"/><rect x="9" y="1" width="1" height="1" fill="#aca899"/><rect x="1" y="2" width="1" height="1" fill="#aca899"/><rect x="10" y="2" width="1" height="1" fill="#fff"/><rect x="1" y="3" width="1" height="1" fill="#aca899"/><rect x="10" y="3" width="1" height="1" fill="#fff"/><rect x="0" y="4" width="1" height="1" fill="#aca899"/><rect x="11" y="4" width="1" height="1" fill="#fff"/><rect x="0" y="5" width="1" height="1" fill="#aca899"/><rect x="11" y="5" width="1" height="1" fill="#fff"/><rect x="0" y="6" width="1" height="1" fill="#aca899"/><rect x="11" y="6" width="1" height="1" fill="#fff"/><rect x="0" y="7" width="1" height="1" fill="#aca899"/><rect x="11" y="7" width="1" height="1" fill="#fff"/><rect x="1" y="8" width="1" height="1" fill="#aca899"/><rect x="10" y="8" width="1" height="1" fill="#fff"/><rect x="1" y="9" width="1" height="1" fill="#aca899"/><rect x="10" y="9" width="1" height="1" fill="#fff"/><rect x="2" y="10" width="1" height="1" fill="#fff"/><rect x="3" y="10" width="1" height="1" fill="#fff"/><rect x="8" y="10" width="1" height="1" fill="#fff"/><rect x="9" y="10" width="1" height="1" fill="#fff"/><rect x="4" y="11" width="1" height="1" fill="#fff"/><rect x="5" y="11" width="1" height="1" fill="#fff"/><rect x="6" y="11" width="1" height="1" fill="#fff"/><rect x="7" y="11" width="1" height="1" fill="#fff"/><rect x="4" y="1" width="1" height="1" fill="#716f64"/><rect x="5" y="1" width="1" height="1" fill="#716f64"/><rect x="6" y="1" width="1" height="1" fill="#716f64"/><rect x="7" y="1" width="1" height="1" fill="#716f64"/><rect x="2" y="2" width="1" height="1" fill="#716f64"/><rect x="3" y="2" width="1" height="1" fill="#716f64"/><rect x="8" y="2" width="1" height="1" fill="#716f64"/><rect x="9" y="2" width="1" height="1" fill="#f1efe2"/><rect x="2" y="3" width="1" height="1" fill="#716f64"/><rect x="9" y="3" width="1" height="1" fill="#f1efe2"/><rect x="1" y="4" width="1" height="1" fill="#716f64"/><rect x="10" y="4" width="1" height="1" fill="#f1efe2"/><rect x="1" y="5" width="1" height="1" fill="#716f64"/><rect x="10" y="5" width="1" height="1" fill="#f1efe2"/><rect x="1" y="6" width="1" height="1" fill="#716f64"/><rect x="10" y="6" width="1" height="1" fill="#f1efe2"/><rect x="1" y="7" width="1" height="1" fill="#716f64"/><rect x="10" y="7" width="1" height="1" fill="#f1efe2"/><rect x="2" y="8" width="1" height="1" fill="#716f64"/><rect x="9" y="8" width="1" height="1" fill="#f1efe2"/><rect x="2" y="9" width="1" height="1" fill="#f1efe2"/><rect x="3" y="9" width="1" height="1" fill="#f1efe2"/><rect x="8" y="9" width="1" height="1" fill="#f1efe2"/><rect x="9" y="9" width="1" height="1" fill="#f1efe2"/><rect x="4" y="10" width="1" height="1" fill="#f1efe2"/><rect x="5" y="10" width="1" height="1" fill="#f1efe2"/><rect x="6" y="10" width="1" height="1" fill="#f1efe2"/><rect x="7" y="10" width="1" height="1" fill="#f1efe2"/><rect x="5" y="4" width="2" height="1" fill="#000"/><rect x="4" y="5" width="4" height="2" fill="#000"/><rect x="5" y="7" width="2" height="1" fill="#000"/></svg><div class="t" style="left:688px;top:224px;color:#000;font-weight:normal;">Average</div><svg style="position:absolute;left:530px;top:244px" width="17" height="17" shape-rendering="crispEdges"><rect x="5" y="0" width="5" height="1" fill="#000"/><rect x="3" y="1" width="2" height="1" fill="#000"/><rect x="10" y="1" width="2" height="1" fill="#000"/><rect x="2" y="2" width="1" height="1" fill="#000"/><rect x="12" y="2" width="1" height="1" fill="#000"/><rect x="1" y="3" width="1" height="1" fill="#000"/><rect x="13" y="3" width="1" height="1" fill="#000"/><rect x="1" y="4" width="1" height="1" fill="#000"/><rect x="13" y="4" width="1" height="1" fill="#000"/><rect x="0" y="5" width="1" height="1" fill="#000"/><rect x="14" y="5" width="1" height="1" fill="#000"/><rect x="0" y="6" width="1" height="1" fill="#000"/><rect x="14" y="6" width="1" height="1" fill="#000"/><rect x="0" y="7" width="1" height="1" fill="#000"/><rect x="14" y="7" width="1" height="1" fill="#000"/><rect x="0" y="8" width="1" height="1" fill="#000"/><rect x="14" y="8" width="1" height="1" fill="#000"/><rect x="0" y="9" width="1" height="1" fill="#000"/><rect x="14" y="9" width="1" height="1" fill="#000"/><rect x="1" y="10" width="1" height="1" fill="#000"/><rect x="13" y="10" width="1" height="1" fill="#000"/><rect x="1" y="11" width="1" height="1" fill="#000"/><rect x="13" y="11" width="1" height="1" fill="#000"/><rect x="2" y="12" width="1" height="1" fill="#000"/><rect x="12" y="12" width="1" height="1" fill="#000"/><rect x="3" y="13" width="2" height="1" fill="#000"/><rect x="10" y="13" width="2" height="1" fill="#000"/><rect x="5" y="14" width="5" height="1" fill="#000"/><rect x="5" y="1" width="5" height="1" fill="#ffff00"/><rect x="3" y="2" width="9" height="1" fill="#ffff00"/><rect x="2" y="3" width="11" height="1" fill="#ffff00"/><rect x="2" y="4" width="11" height="1" fill="#ffff00"/><rect x="1" y="5" width="13" height="1" fill="#ffff00"/><rect x="1" y="6" width="13" height="1" fill="#ffff00"/><rect x="1" y="7" width="13" height="1" fill="#ffff00"/><rect x="1" y="8" width="13" height="1" fill="#ffff00"/><rect x="1" y="9" width="13" height="1" fill="#ffff00"/><rect x="2" y="10" width="11" height="1" fill="#ffff00"/><rect x="2" y="11" width="11" height="1" fill="#ffff00"/><rect x="3" y="12" width="9" height="1" fill="#ffff00"/><rect x="5" y="13" width="5" height="1" fill="#ffff00"/><rect x="4" y="6" width="1" height="1" fill="#fff"/><rect x="4" y="7" width="1" height="1" fill="#fff"/><rect x="5" y="5" width="1" height="1" fill="#fff"/><rect x="5" y="6" width="1" height="1" fill="#fff"/><rect x="6" y="4" width="1" height="1" fill="#fff"/><rect x="6" y="5" width="1" height="1" fill="#fff"/><rect x="7" y="4" width="1" height="1" fill="#fff"/></svg><div class="t" style="left:550px;top:245px;color:#000;font-weight:normal;">Show PIF</div><svg style="position:absolute;left:616px;top:244px" width="12" height="12" shape-rendering="crispEdges"><rect x="4" y="2" width="4" height="1" fill="#fff"/><rect x="3" y="3" width="6" height="1" fill="#fff"/><rect x="2" y="4" width="8" height="1" fill="#fff"/><rect x="2" y="5" width="8" height="1" fill="#fff"/><rect x="2" y="6" width="8" height="1" fill="#fff"/><rect x="2" y="7" width="8" height="1" fill="#fff"/><rect x="3" y="8" width="6" height="1" fill="#fff"/><rect x="4" y="9" width="4" height="1" fill="#fff"/><rect x="4" y="0" width="1" height="1" fill="#aca899"/><rect x="5" y="0" width="1" height="1" fill="#aca899"/><rect x="6" y="0" width="1" height="1" fill="#aca899"/><rect x="7" y="0" width="1" height="1" fill="#aca899"/><rect x="2" y="1" width="1" height="1" fill="#aca899"/><rect x="3" y="1" width="1" height="1" fill="#aca899"/><rect x="8" y="1" width="1" height="1" fill="#aca899"/><rect x="9" y="1" width="1" height="1" fill="#aca899"/><rect x="1" y="2" width="1" height="1" fill="#aca899"/><rect x="10" y="2" width="1" height="1" fill="#fff"/><rect x="1" y="3" width="1" height="1" fill="#aca899"/><rect x="10" y="3" width="1" height="1" fill="#fff"/><rect x="0" y="4" width="1" height="1" fill="#aca899"/><rect x="11" y="4" width="1" height="1" fill="#fff"/><rect x="0" y="5" width="1" height="1" fill="#aca899"/><rect x="11" y="5" width="1" height="1" fill="#fff"/><rect x="0" y="6" width="1" height="1" fill="#aca899"/><rect x="11" y="6" width="1" height="1" fill="#fff"/><rect x="0" y="7" width="1" height="1" fill="#aca899"/><rect x="11" y="7" width="1" height="1" fill="#fff"/><rect x="1" y="8" width="1" height="1" fill="#aca899"/><rect x="10" y="8" width="1" height="1" fill="#fff"/><rect x="1" y="9" width="1" height="1" fill="#aca899"/><rect x="10" y="9" width="1" height="1" fill="#fff"/><rect x="2" y="10" width="1" height="1" fill="#fff"/><rect x="3" y="10" width="1" height="1" fill="#fff"/><rect x="8" y="10" width="1" height="1" fill="#fff"/><rect x="9" y="10" width="1" height="1" fill="#fff"/><rect x="4" y="11" width="1" height="1" fill="#fff"/><rect x="5" y="11" width="1" height="1" fill="#fff"/><rect x="6" y="11" width="1" height="1" fill="#fff"/><rect x="7" y="11" width="1" height="1" fill="#fff"/><rect x="4" y="1" width="1" height="1" fill="#716f64"/><rect x="5" y="1" width="1" height="1" fill="#716f64"/><rect x="6" y="1" width="1" height="1" fill="#716f64"/><rect x="7" y="1" width="1" height="1" fill="#716f64"/><rect x="2" y="2" width="1" height="1" fill="#716f64"/><rect x="3" y="2" width="1" height="1" fill="#716f64"/><rect x="8" y="2" width="1" height="1" fill="#716f64"/><rect x="9" y="2" width="1" height="1" fill="#f1efe2"/><rect x="2" y="3" width="1" height="1" fill="#716f64"/><rect x="9" y="3" width="1" height="1" fill="#f1efe2"/><rect x="1" y="4" width="1" height="1" fill="#716f64"/><rect x="10" y="4" width="1" height="1" fill="#f1efe2"/><rect x="1" y="5" width="1" height="1" fill="#716f64"/><rect x="10" y="5" width="1" height="1" fill="#f1efe2"/><rect x="1" y="6" width="1" height="1" fill="#716f64"/><rect x="10" y="6" width="1" height="1" fill="#f1efe2"/><rect x="1" y="7" width="1" height="1" fill="#716f64"/><rect x="10" y="7" width="1" height="1" fill="#f1efe2"/><rect x="2" y="8" width="1" height="1" fill="#716f64"/><rect x="9" y="8" width="1" height="1" fill="#f1efe2"/><rect x="2" y="9" width="1" height="1" fill="#f1efe2"/><rect x="3" y="9" width="1" height="1" fill="#f1efe2"/><rect x="8" y="9" width="1" height="1" fill="#f1efe2"/><rect x="9" y="9" width="1" height="1" fill="#f1efe2"/><rect x="4" y="10" width="1" height="1" fill="#f1efe2"/><rect x="5" y="10" width="1" height="1" fill="#f1efe2"/><rect x="6" y="10" width="1" height="1" fill="#f1efe2"/><rect x="7" y="10" width="1" height="1" fill="#f1efe2"/></svg><div class="t" style="left:633px;top:243px;color:#000;font-weight:normal;">Line</div><svg style="position:absolute;left:671px;top:244px" width="12" height="12" shape-rendering="crispEdges"><rect x="4" y="2" width="4" height="1" fill="#fff"/><rect x="3" y="3" width="6" height="1" fill="#fff"/><rect x="2" y="4" width="8" height="1" fill="#fff"/><rect x="2" y="5" width="8" height="1" fill="#fff"/><rect x="2" y="6" width="8" height="1" fill="#fff"/><rect x="2" y="7" width="8" height="1" fill="#fff"/><rect x="3" y="8" width="6" height="1" fill="#fff"/><rect x="4" y="9" width="4" height="1" fill="#fff"/><rect x="4" y="0" width="1" height="1" fill="#aca899"/><rect x="5" y="0" width="1" height="1" fill="#aca899"/><rect x="6" y="0" width="1" height="1" fill="#aca899"/><rect x="7" y="0" width="1" height="1" fill="#aca899"/><rect x="2" y="1" width="1" height="1" fill="#aca899"/><rect x="3" y="1" width="1" height="1" fill="#aca899"/><rect x="8" y="1" width="1" height="1" fill="#aca899"/><rect x="9" y="1" width="1" height="1" fill="#aca899"/><rect x="1" y="2" width="1" height="1" fill="#aca899"/><rect x="10" y="2" width="1" height="1" fill="#fff"/><rect x="1" y="3" width="1" height="1" fill="#aca899"/><rect x="10" y="3" width="1" height="1" fill="#fff"/><rect x="0" y="4" width="1" height="1" fill="#aca899"/><rect x="11" y="4" width="1" height="1" fill="#fff"/><rect x="0" y="5" width="1" height="1" fill="#aca899"/><rect x="11" y="5" width="1" height="1" fill="#fff"/><rect x="0" y="6" width="1" height="1" fill="#aca899"/><rect x="11" y="6" width="1" height="1" fill="#fff"/><rect x="0" y="7" width="1" height="1" fill="#aca899"/><rect x="11" y="7" width="1" height="1" fill="#fff"/><rect x="1" y="8" width="1" height="1" fill="#aca899"/><rect x="10" y="8" width="1" height="1" fill="#fff"/><rect x="1" y="9" width="1" height="1" fill="#aca899"/><rect x="10" y="9" width="1" height="1" fill="#fff"/><rect x="2" y="10" width="1" height="1" fill="#fff"/><rect x="3" y="10" width="1" height="1" fill="#fff"/><rect x="8" y="10" width="1" height="1" fill="#fff"/><rect x="9" y="10" width="1" height="1" fill="#fff"/><rect x="4" y="11" width="1" height="1" fill="#fff"/><rect x="5" y="11" width="1" height="1" fill="#fff"/><rect x="6" y="11" width="1" height="1" fill="#fff"/><rect x="7" y="11" width="1" height="1" fill="#fff"/><rect x="4" y="1" width="1" height="1" fill="#716f64"/><rect x="5" y="1" width="1" height="1" fill="#716f64"/><rect x="6" y="1" width="1" height="1" fill="#716f64"/><rect x="7" y="1" width="1" height="1" fill="#716f64"/><rect x="2" y="2" width="1" height="1" fill="#716f64"/><rect x="3" y="2" width="1" height="1" fill="#716f64"/><rect x="8" y="2" width="1" height="1" fill="#716f64"/><rect x="9" y="2" width="1" height="1" fill="#f1efe2"/><rect x="2" y="3" width="1" height="1" fill="#716f64"/><rect x="9" y="3" width="1" height="1" fill="#f1efe2"/><rect x="1" y="4" width="1" height="1" fill="#716f64"/><rect x="10" y="4" width="1" height="1" fill="#f1efe2"/><rect x="1" y="5" width="1" height="1" fill="#716f64"/><rect x="10" y="5" width="1" height="1" fill="#f1efe2"/><rect x="1" y="6" width="1" height="1" fill="#716f64"/><rect x="10" y="6" width="1" height="1" fill="#f1efe2"/><rect x="1" y="7" width="1" height="1" fill="#716f64"/><rect x="10" y="7" width="1" height="1" fill="#f1efe2"/><rect x="2" y="8" width="1" height="1" fill="#716f64"/><rect x="9" y="8" width="1" height="1" fill="#f1efe2"/><rect x="2" y="9" width="1" height="1" fill="#f1efe2"/><rect x="3" y="9" width="1" height="1" fill="#f1efe2"/><rect x="8" y="9" width="1" height="1" fill="#f1efe2"/><rect x="9" y="9" width="1" height="1" fill="#f1efe2"/><rect x="4" y="10" width="1" height="1" fill="#f1efe2"/><rect x="5" y="10" width="1" height="1" fill="#f1efe2"/><rect x="6" y="10" width="1" height="1" fill="#f1efe2"/><rect x="7" y="10" width="1" height="1" fill="#f1efe2"/><rect x="5" y="4" width="2" height="1" fill="#000"/><rect x="4" y="5" width="4" height="2" fill="#000"/><rect x="5" y="7" width="2" height="1" fill="#000"/></svg><div class="t" style="left:688px;top:243px;color:#000;font-weight:normal;">Block</div><div class="t" style="left:528px;top:272px;color:#000;font-weight:normal;">PIF Scale (Left)</div><div style="position:absolute;left:628px;top:267px;width:79px;height:21px;background:#fff;box-shadow:inset 1px 1px 0 #aca899, inset -1px -1px 0 #fff, inset 2px 2px 0 #716f64, inset -2px -2px 0 #fff"></div><div style="position:absolute;left:689px;top:269px;width:17px;height:18px;background:#ece9d8;box-shadow:inset 1px 1px 0 #ece9d8, inset -1px -1px 0 #716f64, inset 2px 2px 0 #fff, inset -2px -2px 0 #aca899"></div><svg style="position:absolute;left:694px;top:276px" width="7" height="4"><path d="M0 0 H7 L3.5 4 Z" fill="#000"/></svg><div class="t" style="left:633px;top:271px;color:#000;font-weight:normal;">Auto Peak</div><div class="t" style="left:529px;top:297px;color:#fff;font-weight:normal;">Jitter Scale (Right)</div><div class="t" style="left:528px;top:296px;color:#aca899;font-weight:normal;">Jitter Scale (Right)</div><div style="position:absolute;left:628px;top:291px;width:79px;height:21px;background:#ece9d8;box-shadow:inset 1px 1px 0 #aca899, inset -1px -1px 0 #fff, inset 2px 2px 0 #716f64, inset -2px -2px 0 #f1efe2"></div><div style="position:absolute;left:689px;top:293px;width:17px;height:18px;background:#ece9d8;box-shadow:inset 1px 1px 0 #ece9d8, inset -1px -1px 0 #716f64, inset 2px 2px 0 #fff, inset -2px -2px 0 #aca899"></div><svg style="position:absolute;left:694px;top:300px" width="7" height="4"><path d="M0 0 H7 L3.5 4 Z" fill="#aca899"/></svg><div class="t" style="left:633px;top:294px;color:#aca899;font-weight:normal;">0 - 4%</div><div class="t" style="left:533px;top:319px;color:#000;font-weight:normal;">Current</div><div class="t" style="left:552px;top:334px;color:#000;font-weight:normal;">0</div><div class="t" style="left:598px;top:319px;color:#000;font-weight:normal;">Max LBA</div><div class="t" style="left:602px;top:334px;color:#000;font-weight:normal;">21F71F</div><div class="t" style="left:664px;top:320px;color:#fff;font-weight:normal;">Jitter Avg</div><div class="t" style="left:663px;top:319px;color:#aca899;font-weight:normal;">Jitter Avg</div><div style="position:absolute;left:516px;top:369px;width:218px;height:31px;border:1px solid #fff;box-sizing:border-box"></div><div style="position:absolute;left:515px;top:368px;width:219px;height:32px;border:1px solid #aca899;box-sizing:border-box"></div><div class="t" style="left:522px;top:361px;padding:0 2px;background:#ece9d8">Progressive Colored Scanning</div><svg style="position:absolute;left:561px;top:380px" width="17" height="17" shape-rendering="crispEdges"><rect x="5" y="0" width="5" height="1" fill="#000"/><rect x="3" y="1" width="2" height="1" fill="#000"/><rect x="10" y="1" width="2" height="1" fill="#000"/><rect x="2" y="2" width="1" height="1" fill="#000"/><rect x="12" y="2" width="1" height="1" fill="#000"/><rect x="1" y="3" width="1" height="1" fill="#000"/><rect x="13" y="3" width="1" height="1" fill="#000"/><rect x="1" y="4" width="1" height="1" fill="#000"/><rect x="13" y="4" width="1" height="1" fill="#000"/><rect x="0" y="5" width="1" height="1" fill="#000"/><rect x="14" y="5" width="1" height="1" fill="#000"/><rect x="0" y="6" width="1" height="1" fill="#000"/><rect x="14" y="6" width="1" height="1" fill="#000"/><rect x="0" y="7" width="1" height="1" fill="#000"/><rect x="14" y="7" width="1" height="1" fill="#000"/><rect x="0" y="8" width="1" height="1" fill="#000"/><rect x="14" y="8" width="1" height="1" fill="#000"/><rect x="0" y="9" width="1" height="1" fill="#000"/><rect x="14" y="9" width="1" height="1" fill="#000"/><rect x="1" y="10" width="1" height="1" fill="#000"/><rect x="13" y="10" width="1" height="1" fill="#000"/><rect x="1" y="11" width="1" height="1" fill="#000"/><rect x="13" y="11" width="1" height="1" fill="#000"/><rect x="2" y="12" width="1" height="1" fill="#000"/><rect x="12" y="12" width="1" height="1" fill="#000"/><rect x="3" y="13" width="2" height="1" fill="#000"/><rect x="10" y="13" width="2" height="1" fill="#000"/><rect x="5" y="14" width="5" height="1" fill="#000"/><rect x="5" y="1" width="5" height="1" fill="#1060f0"/><rect x="3" y="2" width="9" height="1" fill="#1060f0"/><rect x="2" y="3" width="11" height="1" fill="#1060f0"/><rect x="2" y="4" width="11" height="1" fill="#1060f0"/><rect x="1" y="5" width="13" height="1" fill="#1060f0"/><rect x="1" y="6" width="13" height="1" fill="#1060f0"/><rect x="1" y="7" width="13" height="1" fill="#1060f0"/><rect x="1" y="8" width="13" height="1" fill="#1060f0"/><rect x="1" y="9" width="13" height="1" fill="#1060f0"/><rect x="2" y="10" width="11" height="1" fill="#1060f0"/><rect x="2" y="11" width="11" height="1" fill="#1060f0"/><rect x="3" y="12" width="9" height="1" fill="#1060f0"/><rect x="5" y="13" width="5" height="1" fill="#1060f0"/><rect x="4" y="6" width="1" height="1" fill="#fff"/><rect x="4" y="7" width="1" height="1" fill="#fff"/><rect x="5" y="5" width="1" height="1" fill="#fff"/><rect x="5" y="6" width="1" height="1" fill="#fff"/><rect x="6" y="4" width="1" height="1" fill="#fff"/><rect x="6" y="5" width="1" height="1" fill="#fff"/><rect x="7" y="4" width="1" height="1" fill="#fff"/></svg><div class="t" style="left:580px;top:381px;color:#000;font-weight:normal;">Upper</div><svg style="position:absolute;left:661px;top:380px" width="17" height="17" shape-rendering="crispEdges"><rect x="5" y="0" width="5" height="1" fill="#000"/><rect x="3" y="1" width="2" height="1" fill="#000"/><rect x="10" y="1" width="2" height="1" fill="#000"/><rect x="2" y="2" width="1" height="1" fill="#000"/><rect x="12" y="2" width="1" height="1" fill="#000"/><rect x="1" y="3" width="1" height="1" fill="#000"/><rect x="13" y="3" width="1" height="1" fill="#000"/><rect x="1" y="4" width="1" height="1" fill="#000"/><rect x="13" y="4" width="1" height="1" fill="#000"/><rect x="0" y="5" width="1" height="1" fill="#000"/><rect x="14" y="5" width="1" height="1" fill="#000"/><rect x="0" y="6" width="1" height="1" fill="#000"/><rect x="14" y="6" width="1" height="1" fill="#000"/><rect x="0" y="7" width="1" height="1" fill="#000"/><rect x="14" y="7" width="1" height="1" fill="#000"/><rect x="0" y="8" width="1" height="1" fill="#000"/><rect x="14" y="8" width="1" height="1" fill="#000"/><rect x="0" y="9" width="1" height="1" fill="#000"/><rect x="14" y="9" width="1" height="1" fill="#000"/><rect x="1" y="10" width="1" height="1" fill="#000"/><rect x="13" y="10" width="1" height="1" fill="#000"/><rect x="1" y="11" width="1" height="1" fill="#000"/><rect x="13" y="11" width="1" height="1" fill="#000"/><rect x="2" y="12" width="1" height="1" fill="#000"/><rect x="12" y="12" width="1" height="1" fill="#000"/><rect x="3" y="13" width="2" height="1" fill="#000"/><rect x="10" y="13" width="2" height="1" fill="#000"/><rect x="5" y="14" width="5" height="1" fill="#000"/><rect x="5" y="1" width="5" height="1" fill="#1060f0"/><rect x="3" y="2" width="9" height="1" fill="#1060f0"/><rect x="2" y="3" width="11" height="1" fill="#1060f0"/><rect x="2" y="4" width="11" height="1" fill="#1060f0"/><rect x="1" y="5" width="13" height="1" fill="#1060f0"/><rect x="1" y="6" width="13" height="1" fill="#1060f0"/><rect x="1" y="7" width="13" height="1" fill="#1060f0"/><rect x="1" y="8" width="13" height="1" fill="#1060f0"/><rect x="1" y="9" width="13" height="1" fill="#1060f0"/><rect x="2" y="10" width="11" height="1" fill="#1060f0"/><rect x="2" y="11" width="11" height="1" fill="#1060f0"/><rect x="3" y="12" width="9" height="1" fill="#1060f0"/><rect x="5" y="13" width="5" height="1" fill="#1060f0"/><rect x="4" y="6" width="1" height="1" fill="#fff"/><rect x="4" y="7" width="1" height="1" fill="#fff"/><rect x="5" y="5" width="1" height="1" fill="#fff"/><rect x="5" y="6" width="1" height="1" fill="#fff"/><rect x="6" y="4" width="1" height="1" fill="#fff"/><rect x="6" y="5" width="1" height="1" fill="#fff"/><rect x="7" y="4" width="1" height="1" fill="#fff"/></svg><div class="t" style="left:679px;top:381px;color:#000;font-weight:normal;">Lower</div><div style="position:absolute;left:516px;top:411px;width:218px;height:46px;border:1px solid #fff;box-sizing:border-box"></div><div style="position:absolute;left:515px;top:410px;width:219px;height:47px;border:1px solid #aca899;box-sizing:border-box"></div><div class="t" style="left:522px;top:403px;padding:0 2px;background:#ece9d8">Snapshot,&nbsp; Clipboard&nbsp; &amp; Eject</div><div style="position:absolute;left:680px;top:440px;width:35px;height:18px;background:#ece9d8"></div><svg style="position:absolute;left:540px;top:420px" width="32" height="28"><rect x="4" y="5" width="3" height="3" fill="#9a9a9a"/><rect x="3.5" y="7.5" width="24" height="16" rx="1" fill="#e6e6e6" stroke="#c8c8c8" stroke-width="1"/><rect x="4" y="23" width="24" height="1.6" fill="#5a5a5a"/><rect x="27" y="8" width="1.6" height="16" fill="#5a5a5a"/><g fill="#a8a8a8"><rect x="5" y="9" width="1" height="1"/><rect x="7" y="9" width="1" height="1"/><rect x="6" y="10" width="1" height="1"/><rect x="8" y="10" width="1" height="1"/><rect x="5" y="11" width="1" height="1"/><rect x="7" y="11" width="1" height="1"/><rect x="6" y="12" width="1" height="1"/><rect x="8" y="12" width="1" height="1"/><rect x="5" y="13" width="1" height="1"/><rect x="7" y="13" width="1" height="1"/><rect x="6" y="14" width="1" height="1"/><rect x="8" y="14" width="1" height="1"/><rect x="5" y="15" width="1" height="1"/><rect x="7" y="15" width="1" height="1"/><rect x="6" y="16" width="1" height="1"/><rect x="8" y="16" width="1" height="1"/><rect x="5" y="17" width="1" height="1"/><rect x="7" y="17" width="1" height="1"/><rect x="6" y="18" width="1" height="1"/><rect x="8" y="18" width="1" height="1"/><rect x="5" y="19" width="1" height="1"/><rect x="7" y="19" width="1" height="1"/><rect x="6" y="20" width="1" height="1"/><rect x="8" y="20" width="1" height="1"/><rect x="5" y="21" width="1" height="1"/><rect x="7" y="21" width="1" height="1"/><rect x="22" y="9" width="1" height="1"/><rect x="24" y="9" width="1" height="1"/><rect x="23" y="10" width="1" height="1"/><rect x="25" y="10" width="1" height="1"/><rect x="22" y="11" width="1" height="1"/><rect x="24" y="11" width="1" height="1"/><rect x="23" y="12" width="1" height="1"/><rect x="25" y="12" width="1" height="1"/><rect x="22" y="13" width="1" height="1"/><rect x="24" y="13" width="1" height="1"/><rect x="23" y="14" width="1" height="1"/><rect x="25" y="14" width="1" height="1"/><rect x="22" y="15" width="1" height="1"/><rect x="24" y="15" width="1" height="1"/><rect x="23" y="16" width="1" height="1"/><rect x="25" y="16" width="1" height="1"/><rect x="22" y="17" width="1" height="1"/><rect x="24" y="17" width="1" height="1"/><rect x="23" y="18" width="1" height="1"/><rect x="25" y="18" width="1" height="1"/><rect x="22" y="19" width="1" height="1"/><rect x="24" y="19" width="1" height="1"/><rect x="23" y="20" width="1" height="1"/><rect x="25" y="20" width="1" height="1"/><rect x="22" y="21" width="1" height="1"/><rect x="24" y="21" width="1" height="1"/></g><circle cx="15.5" cy="15" r="5.2" fill="#8a8a8a"/><circle cx="15.5" cy="15" r="4" fill="#5a5a5a"/><circle cx="15.5" cy="15" r="2.6" fill="#1a1a1a"/><rect x="14" y="13.5" width="1.5" height="1.5" fill="#fff"/></svg><svg style="position:absolute;left:615px;top:418px" width="32" height="30"><defs><linearGradient id="cb" x1="0" y1="0" x2="0" y2="1"><stop offset="0" stop-color="#e0a060"/><stop offset="0.5" stop-color="#c88040"/><stop offset="0.7" stop-color="#b87030"/><stop offset="1" stop-color="#d09050"/></linearGradient><linearGradient id="pp" x1="0" y1="0" x2="1" y2="1"><stop offset="0" stop-color="#fff"/><stop offset="1" stop-color="#e0e0e0"/></linearGradient></defs><rect x="3.5" y="6.5" width="18" height="21" rx="1.5" fill="url(#cb)" stroke="#7a4018" stroke-width="1"/><path d="M6 9.5 Q6 7.5 8.5 7.5 H10 Q10.5 4 12.5 4 Q14.5 4 15 7.5 H16.5 Q19 7.5 19 9.5 Z" fill="#d8d8d8" stroke="#808080" stroke-width="1"/><rect x="11.5" y="5.5" width="2" height="1.5" fill="#707070"/><path d="M13.5 9.5 H24 L27.5 13 V25.5 H13.5 Z" fill="url(#pp)" stroke="#707070" stroke-width="1"/><path d="M23.5 9.5 L27.5 13.5 H23.5 Z" fill="#4aa0e8"/><g fill="#a0a0a0"><rect x="15" y="13" width="7" height="1"/><rect x="15" y="16" width="10" height="1"/><rect x="15" y="19" width="10" height="1"/><rect x="15" y="22" width="10" height="1"/></g></svg><svg style="position:absolute;left:682px;top:424px" width="30" height="18"><defs><linearGradient id="dg" x1="0" y1="0" x2="0" y2="1"><stop offset="0" stop-color="#f4f4f4"/><stop offset="1" stop-color="#c0c0c0"/></linearGradient></defs><path d="M8.5 3.5 H21.5 L26.5 8.5 V13.5 Q26.5 14.5 25.5 14.5 H4.5 Q3.5 14.5 3.5 13.5 V8.5 Z" fill="url(#dg)" stroke="#808080" stroke-width="1"/><rect x="10" y="9.5" width="15" height="1.5" fill="#707070"/><rect x="5.5" y="9.5" width="1.5" height="1.5" fill="#20c020"/><rect x="8" y="10" width="1" height="1" fill="#909090"/></svg><div style="position:absolute;left:684px;top:439px;font-family:'Liberation Sans', sans-serif;font-size:11px;line-height:13px;font-weight:bold;color:#000;white-space:nowrap;will-change:transform;-webkit-text-stroke-width:0.2px;text-shadow:0 0 1px #fff,1px 1px 0 #fff">Eject</div><div style="position:absolute;left:516px;top:468px;width:218px;height:39px;border:1px solid #fff;box-sizing:border-box"></div><div style="position:absolute;left:515px;top:467px;width:219px;height:40px;border:1px solid #aca899;box-sizing:border-box"></div><div class="t" style="left:522px;top:460px;padding:0 2px;background:#ece9d8">Control</div><div style="position:absolute;left:524px;top:477px;width:200px;height:1px;background:#c8b890"></div><div style="position:absolute;left:524px;top:477px;width:1px;height:23px;background:#c8b890"></div><div style="position:absolute;left:525px;top:478px;width:48px;height:21px;box-sizing:border-box;border:1px solid #003c74;border-radius:3px;background:linear-gradient(180deg,#fff 0%,#f6f5f0 50%,#ebe9e0 85%,#d8d4c4 100%)"></div><div class="t" style="left:526px;width:48px;text-align:center;top:481px"><u>S</u>tart</div><div style="position:absolute;left:575px;top:478px;width:48px;height:21px;box-sizing:border-box;border:1px solid #003c74;border-radius:3px;background:linear-gradient(180deg,#fff 0%,#f6f5f0 50%,#ebe9e0 85%,#d8d4c4 100%)"></div><div class="t" style="left:576px;width:48px;text-align:center;top:481px">S<u>t</u>op</div><div style="position:absolute;left:625px;top:478px;width:48px;height:21px;box-sizing:border-box;border:1px solid #003c74;border-radius:3px;background:linear-gradient(180deg,#fff 0%,#f6f5f0 50%,#ebe9e0 85%,#d8d4c4 100%)"></div><div class="t" style="left:626px;width:48px;text-align:center;top:481px"><u>L</u>oad</div><div style="position:absolute;left:675px;top:478px;width:48px;height:21px;box-sizing:border-box;border:1px solid #003c74;border-radius:3px;background:linear-gradient(180deg,#fff 0%,#f6f5f0 50%,#ebe9e0 85%,#d8d4c4 100%)"></div><div class="t" style="left:676px;width:48px;text-align:center;top:481px"><u>S</u>ave</div><div style="position:absolute;left:515px;top:511px;width:220px;height:32px;background:#fff"></div><div style="position:absolute;left:515px;top:511px;width:219px;height:31px;background:#aca899"></div><div style="position:absolute;left:516px;top:512px;width:218px;height:30px;background:#316ac5"></div><div class="t" style="left:518px;width:218px;text-align:center;top:519px;color:#fff;font-size:12px;line-height:14px;transform:scaleX(0.88)">100 % Complete</div></body></html>
